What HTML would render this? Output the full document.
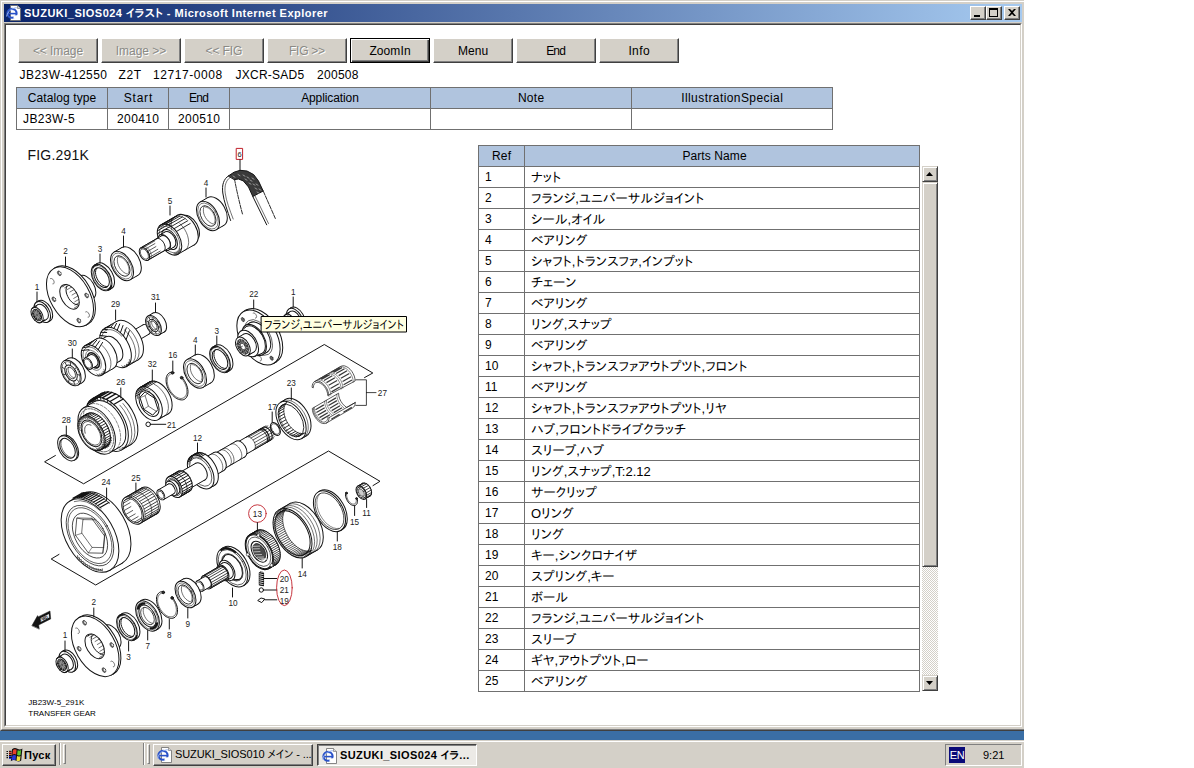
<!DOCTYPE html>
<html lang="ja"><head><meta charset="utf-8"><title>SUZUKI_SIOS024 イラスト</title>
<style>
html,body{margin:0;padding:0;background:#fff;}
body{width:1194px;height:768px;position:relative;overflow:hidden;font-family:"Liberation Sans","IPAPGothic","IPAGothic",sans-serif;font-size:13px;color:#000;}
.abs{position:absolute;}
#win{position:absolute;left:0;top:0;width:1024px;height:731px;background:#d4d0c8;overflow:hidden;}
#win .b1{position:absolute;left:1px;top:1px;width:1030px;bottom:1px;border:1px solid #fff;border-bottom-color:#808080;box-sizing:border-box;}
#win .outer{position:absolute;left:0;top:0;width:1034px;bottom:0;border:1px solid #d4d0c8;border-bottom-color:#404040;box-sizing:border-box;}
#title{position:absolute;left:4px;top:4px;width:1018px;height:18px;background:linear-gradient(to right,#0a246a 0%,#a6caf0 100%);}
#title .t{position:absolute;left:20px;top:2px;color:#fff;font-weight:bold;font-size:11px;line-height:14px;white-space:nowrap;font-family:"Liberation Sans","IPAPGothic","IPAGothic",sans-serif;}
#client{position:absolute;left:4px;top:23px;width:1016px;height:702px;box-sizing:content-box;border:1px solid;border-color:#808080 #fff #fff #808080;}
#client i{position:absolute;left:0;top:0;right:0;bottom:0;background:#fff;border:1px solid;border-color:#404040 #d4d0c8 #d4d0c8 #404040;}
.btn{position:absolute;top:38px;width:80px;height:25px;box-sizing:border-box;background:#d4d0c8;border:1px solid;border-color:#fff #404040 #404040 #fff;box-shadow:inset -1px -1px 0 #808080;font-size:12px;line-height:24px;text-align:center;color:#000;}
.btn.dis{color:#8a8a86;text-shadow:1px 1px 0 #fff;}
.btn.foc{border-color:#000;box-shadow:inset 1px 1px 0 #fff,inset -1px -1px 0 #404040,inset -2px -2px 0 #808080;}
table{border-collapse:collapse;position:absolute;table-layout:fixed;}
td,th{border:1px solid #707070;font-weight:normal;font-size:12px;padding:0;box-sizing:border-box;overflow:hidden;white-space:nowrap;}
th{background:#b0c4de;text-align:center;}
#t1 td,#t1 th{height:21px;}
#t1 td{text-align:center;}
#vin span{position:absolute;top:68px;font-size:12px;line-height:14px;white-space:pre;}
th span,td span,.btn span{white-space:pre;}
#t2 td,#t2 th{height:21px;}
#t2 td{padding-left:6px;text-align:left;}
#t2 td+td{font-size:13px;}
.sbb{position:absolute;left:0;width:16px;height:16px;box-sizing:border-box;background:#d4d0c8;border:1px solid;border-color:#d4d0c8 #404040 #404040 #d4d0c8;box-shadow:inset 1px 1px 0 #fff,inset -1px -1px 0 #808080;}
.sbb svg{position:absolute;left:-1px;top:-1px;}
.trk{position:absolute;left:0;top:0;width:16px;height:525px;background-color:#d4d0c8;background-image:linear-gradient(45deg,#fff 25%,transparent 25%,transparent 75%,#fff 75%),linear-gradient(45deg,#fff 25%,transparent 25%,transparent 75%,#fff 75%);background-size:2px 2px;background-position:0 0,1px 1px;}
.cb{position:absolute;top:2px;width:16px;height:14px;box-sizing:border-box;background:#d4d0c8;border:1px solid;border-color:#fff #404040 #404040 #fff;box-shadow:inset -1px -1px 0 #808080;}
.cb svg{position:absolute;left:-1px;top:-1px;}
.tb{position:absolute;top:4px;height:22px;box-sizing:border-box;background:#d4d0c8;border:1px solid;border-color:#fff #404040 #404040 #fff;box-shadow:inset -1px -1px 0 #808080;font-size:11px;line-height:19px;white-space:nowrap;overflow:hidden;}
.tb.act{border-color:#404040 #fff #fff #404040;box-shadow:inset 1px 1px 0 #808080;background:#eceae6;font-weight:bold;}
.grip{position:absolute;top:4px;width:3px;height:20px;box-sizing:border-box;border:1px solid;border-color:#fff #808080 #808080 #fff;}
.sep{position:absolute;top:3px;width:2px;height:22px;box-sizing:border-box;border-left:1px solid #808080;border-right:1px solid #fff;}
#tray{position:absolute;left:945px;top:4px;width:77px;height:22px;box-sizing:border-box;border:1px solid;border-color:#808080 #fff #fff #808080;font-size:11px;}
#desk{position:absolute;left:0;top:731px;width:1024px;height:9px;background:#3a6ea5;}
#task{position:absolute;left:0;top:740px;width:1024px;height:28px;background:#d4d0c8;box-shadow:inset 0 1px 0 #d4d0c8,inset 0 2px 0 #fff;}
/*FIT*/
#b1{letter-spacing:-0.07px;margin-right:0.07px}
#b2{letter-spacing:-0.03px;margin-right:0.03px}
#b3{letter-spacing:-0.11px;margin-right:0.11px}
#b4{letter-spacing:-0.29px;margin-right:0.29px}
#b5{letter-spacing:0.10px;margin-right:-0.10px}
#b6{letter-spacing:0.06px;margin-right:-0.06px}
#b7{letter-spacing:-0.83px;margin-right:0.83px}
#b8{letter-spacing:0.39px;margin-right:-0.39px}
#v1{letter-spacing:0.45px;margin-right:-0.45px}
#v2{letter-spacing:0.68px;margin-right:-0.68px}
#v3{letter-spacing:0.57px;margin-right:-0.57px}
#v4{letter-spacing:0.25px;margin-right:-0.25px}
#v5{letter-spacing:0.29px;margin-right:-0.29px}
#h1{letter-spacing:0.10px;margin-right:-0.10px}
#h2{letter-spacing:0.79px;margin-right:-0.79px}
#h3{letter-spacing:-0.68px;margin-right:0.68px}
#h4{letter-spacing:-0.10px;margin-right:0.10px}
#h5{letter-spacing:0.28px;margin-right:-0.28px}
#h6{letter-spacing:0.42px;margin-right:-0.42px}
#c1{letter-spacing:0.41px;margin-right:-0.41px}
#c2{letter-spacing:0.37px;margin-right:-0.37px}
#c3{letter-spacing:0.37px;margin-right:-0.37px}
#h7{letter-spacing:0.26px;margin-right:-0.26px}
#h8{letter-spacing:0.09px;margin-right:-0.09px}
#ttl{letter-spacing:0.48px;margin-right:-0.48px}
#tk1{letter-spacing:-0.12px;margin-right:0.12px}
#tk2{letter-spacing:0.40px;margin-right:-0.40px}
/*/FIT*/
</style></head><body>
<div id="win"><div class="outer"></div><div class="b1"></div>
<div id="title"><div class="cb" style="left:966px"><svg width="16" height="14" viewBox="0 0 16 14"><rect x="4" y="9" width="6" height="2" fill="#000"/></svg></div>
<div class="cb" style="left:982px"><svg width="16" height="14" viewBox="0 0 16 14"><path d="M3 2h9v9h-9z M4 4v6h7v-6z" fill="#000" fill-rule="evenodd"/></svg></div>
<div class="cb" style="left:1000px"><svg width="16" height="14" viewBox="0 0 16 14"><path d="M4 3h2l2 2 2-2h2l-3 3.5 3 3.5h-2l-2-2-2 2h-2l3-3.5z" fill="#000"/></svg></div>
<div style="position:absolute;left:2px;top:1px;width:16px;height:16px"><svg class="ie" width="16" height="16" viewBox="0 0 16 16"><path d="M4.5 0.5h7l3 3v12h-10z" fill="#fff" stroke="#6a6a6a" stroke-width="0.8"/><path d="M11.5 0.5v3h3" fill="#d8d8d8" stroke="#6a6a6a" stroke-width="0.6"/><ellipse cx="6" cy="8.3" rx="4.6" ry="4.4" fill="none" stroke="#2a52c8" stroke-width="2.1"/><path d="M1.6 8.6h8.6" stroke="#2a52c8" stroke-width="1.6"/><path d="M7.5 10.3h4v3.5h-4z" fill="#fff"/><path d="M0.6 11.5c1-5 5-8.5 10.2-8.8" fill="none" stroke="#9ab4f0" stroke-width="1"/></svg></div><div class="t" id="ttl">SUZUKI_SIOS024 イラスト - Microsoft Internet Explorer</div></div>
<div id="client"><i></i></div>
</div>
<div class="btn dis" style="left:18px"><span id="b1">&lt;&lt; Image</span></div>
<div class="btn dis" style="left:101px"><span id="b2">Image &gt;&gt;</span></div>
<div class="btn dis" style="left:184px"><span id="b3">&lt;&lt; FIG</span></div>
<div class="btn dis" style="left:267px"><span id="b4">FIG &gt;&gt;</span></div>
<div class="btn foc" style="left:350px"><span id="b5">ZoomIn</span></div>
<div class="btn " style="left:433px"><span id="b6">Menu</span></div>
<div class="btn " style="left:516px"><span id="b7">End</span></div>
<div class="btn " style="left:599px"><span id="b8">Info</span></div>
<div id="vin"><span id="v1" style="left:19.6px">JB23W-412550</span><span id="v2" style="left:118.5px">Z2T</span><span id="v3" style="left:153px">12717-0008</span><span id="v4" style="left:235.5px">JXCR-SAD5</span><span id="v5" style="left:317px">200508</span></div>
<table id="t1" style="left:16px;top:87px;width:817px;">
<colgroup><col style="width:91px"><col style="width:61px"><col style="width:61px"><col style="width:201px"><col style="width:201px"><col style="width:201px"></colgroup>
<tr><th><span id="h1">Catalog type</span></th><th><span id="h2">Start</span></th><th><span id="h3">End</span></th><th><span id="h4">Application</span></th><th><span id="h5">Note</span></th><th><span id="h6">IllustrationSpecial</span></th></tr>
<tr><td style="text-align:left;padding-left:6px"><span id="c1">JB23W-5</span></td><td><span id="c2">200410</span></td><td><span id="c3">200510</span></td><td></td><td></td><td></td></tr>
</table>
<table id="t2" style="left:478px;top:145px;width:441px;">
<colgroup><col style="width:46px"><col style="width:395px"></colgroup>
<tr><th><span id="h7">Ref</span></th><th style="padding-right:15px"><span id="h8">Parts Name</span></th></tr>
<tr><td>1</td><td>ナット</td></tr>
<tr><td>2</td><td>フランジ,ユニバーサルジョイント</td></tr>
<tr><td>3</td><td>シール,オイル</td></tr>
<tr><td>4</td><td>ベアリング</td></tr>
<tr><td>5</td><td>シャフト,トランスファ,インプット</td></tr>
<tr><td>6</td><td>チェーン</td></tr>
<tr><td>7</td><td>ベアリング</td></tr>
<tr><td>8</td><td>リング,スナップ</td></tr>
<tr><td>9</td><td>ベアリング</td></tr>
<tr><td>10</td><td>シャフト,トランスファアウトプツト,フロント</td></tr>
<tr><td>11</td><td>ベアリング</td></tr>
<tr><td>12</td><td>シャフト,トランスファアウトプツト,リヤ</td></tr>
<tr><td>13</td><td>ハブ,フロントドライブクラッチ</td></tr>
<tr><td>14</td><td>スリーブ,ハブ</td></tr>
<tr><td>15</td><td>リング,スナップ,T:2.12</td></tr>
<tr><td>16</td><td>サークリップ</td></tr>
<tr><td>17</td><td>Oリング</td></tr>
<tr><td>18</td><td>リング</td></tr>
<tr><td>19</td><td>キー,シンクロナイザ</td></tr>
<tr><td>20</td><td>スプリング,キー</td></tr>
<tr><td>21</td><td>ボール</td></tr>
<tr><td>22</td><td>フランジ,ユニバーサルジョイント</td></tr>
<tr><td>23</td><td>スリーブ</td></tr>
<tr><td>24</td><td>ギヤ,アウトプツト,ロー</td></tr>
<tr><td>25</td><td>ベアリング</td></tr>
</table>
<div id="sb" class="abs" style="left:922px;top:166px;width:16px;height:525px;">
<div class="trk"></div>
<div class="sbb" style="top:0"><svg width="16" height="16" viewBox="0 0 16 16"><path d="M4 10h7l-3.5-4z" fill="#000"/></svg></div>
<div class="sbb" style="top:16px;height:385px"></div>
<div class="sbb" style="top:509px"><svg width="16" height="16" viewBox="0 0 16 16"><path d="M4 6h7l-3.5 4z" fill="#000"/></svg></div>
</div>
<!--DIAG--><svg id="dg" width="480" height="600" viewBox="0 140 480 600" style="position:absolute;left:0;top:140px;" fill="none" stroke="#141414" stroke-width="1" stroke-linecap="round" stroke-linejoin="round" font-family="Liberation Sans, sans-serif">
<text x="27.5" y="160.3" font-size="14" fill="#111" stroke="none" textLength="61.3">FIG.291K</text>
<ellipse cx="44.4" cy="310.8" rx="6.9" ry="11.5" transform="rotate(-30 44.4 310.8)" fill="#fff"/>
<path d="M36.5 302L38.7 300.8L50.2 320.7L48 322Z" fill="#fff" stroke="none"/>
<path d="M36.5 302L38.7 300.8"/>
<path d="M48 322L50.2 320.7"/>
<ellipse cx="42.3" cy="312" rx="6.9" ry="11.5" transform="rotate(-30 42.3 312)" fill="#fff"/>
<ellipse cx="42.3" cy="312" rx="5.1" ry="8.5" transform="rotate(-30 42.3 312)" fill="#fff"/>
<path d="M32.8 307.6L38 304.6L46.5 319.4L41.3 322.4Z" fill="#fff" stroke="none"/>
<path d="M32.8 307.6L38 304.6"/>
<path d="M41.3 322.4L46.5 319.4"/>
<ellipse cx="37.1" cy="315" rx="5.1" ry="8.5" transform="rotate(-30 37.1 315)" fill="#fff"/>
<path d="M39.6 322.8L44.8 319.8M34.7 320.3L39.9 317.3M31.3 314.4L36.5 311.4M31.6 309L36.8 306" fill="none"/>
<ellipse cx="37.1" cy="315" rx="3.7" ry="6.2" transform="rotate(-30 37.1 315)" fill="#fff"/>
<ellipse cx="37.1" cy="315" rx="3" ry="5" transform="rotate(-30 37.1 315)" fill="#555"/>
<path d="M36.1 313.3L34.6 310.7M36.9 313.2L36.6 310.6M37.8 313.9L38.8 312.2M38.4 315L40.3 314.9M38.5 316L40.6 317.6M38.1 316.7L39.6 319.3M37.3 316.8L37.6 319.4M36.4 316.1L35.4 317.8M35.8 315L33.8 315.1M35.7 314L33.5 312.4" fill="none" stroke="#ddd" stroke-width="0.5"/>
<text x="37" y="290" font-size="8.2" text-anchor="middle" fill="#222" stroke="none">1</text>
<path d="M37 292L37 302"/>
<ellipse cx="81.3" cy="290.3" rx="7.8" ry="13" transform="rotate(-30 81.3 290.3)" fill="#fff"/>
<path d="M64 278.3L74.8 279L87.8 301.6L83 311.3Z" fill="#fff" stroke="none"/>
<path d="M64 278.3L74.8 279"/>
<path d="M83 311.3L87.8 301.6"/>
<ellipse cx="73.5" cy="294.8" rx="11.4" ry="19" transform="rotate(-30 73.5 294.8)" fill="#fff"/>
<ellipse cx="81.3" cy="290.3" rx="7.8" ry="13" transform="rotate(-30 81.3 290.3)" fill="#fff"/>
<ellipse cx="86.5" cy="287.3" rx="7.8" ry="13" transform="rotate(-30 86.5 287.3)" fill="#fff"/>
<path d="M74.8 279L80 276L93 298.6L87.8 301.6Z" fill="#fff" stroke="none"/>
<path d="M74.8 279L80 276"/>
<path d="M87.8 301.6L93 298.6"/>
<ellipse cx="81.3" cy="290.3" rx="7.8" ry="13" transform="rotate(-30 81.3 290.3)" fill="#fff"/>
<ellipse cx="71.9" cy="295.7" rx="19.6" ry="32.6" transform="rotate(-30 71.9 295.7)" fill="#fff"/>
<path d="M53.7 268.6L55.6 267.5L88.2 323.9L86.3 325Z" fill="#fff" stroke="none"/>
<path d="M53.7 268.6L55.6 267.5"/>
<path d="M86.3 325L88.2 323.9"/>
<ellipse cx="70" cy="296.8" rx="19.6" ry="32.6" transform="rotate(-30 70 296.8)" fill="#fff"/>
<ellipse cx="69.5" cy="296.8" rx="8.1" ry="13.5" transform="rotate(-30 69.5 296.8)" fill="#fff"/>
<path d="M77.7 304.8L75.9 304.5L74.1 303.7L72.3 302.5L70.6 300.8L69 298.8L67.8 296.6L66.8 294.3L66.2 292L66 289.8L66.3 287.8L66.9 286.1" fill="none"/>
<path d="M63.2 286L63.2 286" fill="none"/>
<path d="M66.3 284.5L62 287M69 285.3L64.7 287.8M71.7 287L67.4 289.5M74.2 289.5L69.9 292M76.4 292.5L72.1 295M78 295.9L73.7 298.4M79 299.3L74.7 301.8M79.2 302.6L74.9 305.1M78.7 305.4L74.4 307.9" fill="none" stroke-width="0.6"/>
<ellipse cx="59.3" cy="273.3" rx="1.6" ry="2.6" transform="rotate(-30 59.3 273.3)" fill="#777" stroke-width="0.5"/>
<ellipse cx="59.9" cy="273.1" rx="1" ry="1.6" transform="rotate(-30 59.9 273.1)" fill="#fff" stroke-width="0.3"/>
<ellipse cx="86.6" cy="295.5" rx="1.6" ry="2.6" transform="rotate(-30 86.6 295.5)" fill="#777" stroke-width="0.5"/>
<ellipse cx="87.2" cy="295.3" rx="1" ry="1.6" transform="rotate(-30 87.2 295.3)" fill="#fff" stroke-width="0.3"/>
<ellipse cx="78.8" cy="320.6" rx="1.6" ry="2.6" transform="rotate(-30 78.8 320.6)" fill="#777" stroke-width="0.5"/>
<ellipse cx="79.4" cy="320.4" rx="1" ry="1.6" transform="rotate(-30 79.4 320.4)" fill="#fff" stroke-width="0.3"/>
<ellipse cx="53.9" cy="299.3" rx="1.6" ry="2.6" transform="rotate(-30 53.9 299.3)" fill="#777" stroke-width="0.5"/>
<ellipse cx="54.5" cy="299.1" rx="1" ry="1.6" transform="rotate(-30 54.5 299.1)" fill="#fff" stroke-width="0.3"/>
<path d="M50.5 278.6L50.9 278.5L51.3 278.5L51.7 278.6L52.2 278.8L52.7 279.2L53.1 279.7L53.5 280.2L53.8 280.8L54 281.4L54.1 282L54.1 282.5L54.1 283L53.9 283.4L53.6 283.7L53.3 283.9L52.9 283.9" fill="none" stroke-width="0.6"/>
<path d="M85.7 311.9L86.1 311.7L86.5 311.7L87 311.9L87.5 312.1L87.9 312.5L88.4 312.9L88.7 313.5L89 314L89.3 314.6L89.4 315.2L89.4 315.8L89.3 316.3L89.1 316.7L88.9 317L88.5 317.2L88.1 317.2" fill="none" stroke-width="0.6"/>
<text x="65.5" y="254" font-size="8.2" text-anchor="middle" fill="#222" stroke="none">2</text>
<path d="M65.5 257L65.5 266"/>
<ellipse cx="104.2" cy="276.1" rx="8.6" ry="14.4" transform="rotate(-30 104.2 276.1)" fill="#fff"/>
<path d="M94.4 265.1L97 263.6L111.4 288.6L108.8 290.1Z" fill="#fff" stroke="none"/>
<path d="M94.4 265.1L97 263.6"/>
<path d="M108.8 290.1L111.4 288.6"/>
<ellipse cx="101.6" cy="277.6" rx="8.6" ry="14.4" transform="rotate(-30 101.6 277.6)" fill="#fff"/>
<ellipse cx="101.6" cy="277.6" rx="7.9" ry="13.2" transform="rotate(-30 101.6 277.6)" fill="none" stroke-width="0.5"/>
<ellipse cx="101.6" cy="277.6" rx="6.5" ry="10.8" transform="rotate(-30 101.6 277.6)" fill="#fff"/>
<path d="M107.7 286.4L106.2 286.5L104.6 286.1L102.9 285.4L101.3 284.2L99.7 282.6L98.3 280.8L97.2 278.8L96.3 276.7L95.7 274.6L95.5 272.6L95.7 270.7L96.2 269.2L97 268" fill="none"/>
<path d="M111.2 285.9L110.6 287.2L109.9 288.4L109 289.3L107.8 289.9" fill="none" stroke-width="1.6"/>
<path d="M92.7 267.8L93.6 266.5L94.7 265.6L96.1 265.1L97.6 265" fill="none" stroke-width="1.4"/>
<text x="100" y="251.5" font-size="8.2" text-anchor="middle" fill="#222" stroke="none">3</text>
<path d="M100 254L100 263"/>
<ellipse cx="129.8" cy="261.5" rx="9.6" ry="16" transform="rotate(-30 129.8 261.5)" fill="#fff"/>
<path d="M114 252.1L121.8 247.6L137.8 275.4L130 279.9Z" fill="#fff" stroke="none"/>
<path d="M114 252.1L121.8 247.6"/>
<path d="M130 279.9L137.8 275.4"/>
<ellipse cx="122" cy="266" rx="9.6" ry="16" transform="rotate(-30 122 266)" fill="#fff"/>
<ellipse cx="122" cy="266" rx="8.5" ry="14.2" transform="rotate(-30 122 266)" fill="none" stroke-width="0.5"/>
<ellipse cx="122" cy="266" rx="6.7" ry="11.2" transform="rotate(-30 122 266)" fill="#fff" stroke-width="0.8"/>
<path d="M128.8 274L127.2 274L125.6 273.4L123.9 272.4L122.3 271.1L120.8 269.4L119.5 267.5L118.4 265.4L117.7 263.2L117.4 261.2L117.4 259.2L117.7 257.5L118.4 256.1" fill="none" stroke-width="0.6"/>
<path d="M119.2 257.1L120.6 257.4L122.2 258L123.7 259.1L125.2 260.5L126.5 262.2L127.5 264L128.3 266L128.8 268L129 269.8L128.8 271.5L128.3 272.9" fill="none" stroke-width="0.5"/>
<text x="123.5" y="234" font-size="8.2" text-anchor="middle" fill="#222" stroke="none">4</text>
<path d="M123.5 236L123.5 247"/>
<ellipse cx="189.4" cy="228" rx="8.4" ry="14" transform="rotate(-30 189.4 228)" fill="#fff"/>
<path d="M179 217.9L182.4 215.9L196.4 240.1L193 242.1Z" fill="#fff" stroke="none"/>
<path d="M179 217.9L182.4 215.9"/>
<path d="M193 242.1L196.4 240.1"/>
<ellipse cx="186" cy="230" rx="8.4" ry="14" transform="rotate(-30 186 230)" fill="#fff"/>
<ellipse cx="186" cy="230" rx="10.2" ry="17" transform="rotate(-30 186 230)" fill="#fff"/>
<path d="M161 224.8L177.5 215.3L194.5 244.7L178 254.2Z" fill="#fff" stroke="none"/>
<path d="M161 224.8L177.5 215.3"/>
<path d="M178 254.2L194.5 244.7"/>
<ellipse cx="169.5" cy="239.5" rx="10.2" ry="17" transform="rotate(-30 169.5 239.5)" fill="#fff"/>
<path d="M157.3 233.9L171.1 225.9M157.4 230.9L171.2 222.9M158.1 228.2L172 220.2M159.4 226.1L173.3 218.1M161.2 224.7L175 216.7M163.4 224L177.2 216M165.9 224.1L179.8 216.1M168.6 224.9L182.4 216.9M171.3 226.5L185.2 218.5M174 228.7L187.8 220.7M176.4 231.5L190.2 223.5" fill="none" stroke-width="0.9"/>
<path d="M171.8 229.9L171.2 226.6L171.2 223.5L171.7 220.8L172.9 218.6L174.5 217L176.5 216.1L178.9 215.9L181.5 216.5L184.1 217.8L186.8 219.7" fill="none" stroke-width="0.6"/>
<path d="M179.8 223.7L182.3 226.2L184.5 229.1L186.3 232.4L187.6 235.7L188.4 239.1L188.7 242.3L188.3 245.2L187.4 247.6L186 249.4L184.1 250.6" fill="none" stroke-width="0.6"/>
<path d="M179.7 248.3L180.7 250.2L179.2 249.7L179.9 251.6L178.4 250.9L179 252.8L177.5 251.8L177.9 253.7L176.4 252.5L176.6 254.3L175.2 252.9L175.1 254.6L173.8 253" stroke-width="0.6"/>
<ellipse cx="169.5" cy="239.5" rx="8.7" ry="14.5" transform="rotate(-30 169.5 239.5)" fill="none" stroke-width="0.5"/>
<ellipse cx="169.5" cy="239.5" rx="6.6" ry="11" transform="rotate(-30 169.5 239.5)" fill="#fff"/>
<ellipse cx="169.5" cy="239.5" rx="5.3" ry="8.8" transform="rotate(-30 169.5 239.5)" fill="#fff"/>
<path d="M159.9 234.9L165.1 231.9L173.9 247.1L168.7 250.1Z" fill="#fff" stroke="none"/>
<path d="M159.9 234.9L165.1 231.9"/>
<path d="M168.7 250.1L173.9 247.1"/>
<ellipse cx="164.3" cy="242.5" rx="5.3" ry="8.8" transform="rotate(-30 164.3 242.5)" fill="#fff"/>
<ellipse cx="165.2" cy="242" rx="4.3" ry="7.2" transform="rotate(-30 165.2 242)" fill="#fff"/>
<path d="M140.8 247.8L161.6 235.8L168.8 248.2L148 260.2Z" fill="#fff" stroke="none"/>
<path d="M140.8 247.8L161.6 235.8"/>
<path d="M148 260.2L168.8 248.2"/>
<ellipse cx="144.4" cy="254" rx="4.3" ry="7.2" transform="rotate(-30 144.4 254)" fill="#fff"/>
<path d="M148.6 259.6L162.5 251.6M146.3 259.1L160.2 251.1M144 257.3L157.8 249.3M142.1 254.6L155.9 246.6M141 251.6L154.9 243.6M141.1 248.8L154.9 240.8M142.2 247L156.1 239" fill="none" stroke-width="0.7"/>
<path d="M156.4 238.8L157.2 238.5L158.2 238.4L159.3 238.7L160.3 239.2L161.4 240L162.4 241L163.3 242.2L164.1 243.5L164.6 244.9L165 246.2L165.2 247.6L165.1 248.8L164.8 249.8L164.3 250.7L163.6 251.2" fill="none"/>
<path d="M142.5 246.8L143.4 246.5L144.4 246.4L145.4 246.7L146.5 247.2L147.6 248L148.6 249L149.5 250.2L150.2 251.5L150.8 252.9L151.2 254.2L151.3 255.6L151.2 256.8L150.9 257.8L150.4 258.7L149.7 259.2" fill="none" stroke-width="0.5"/>
<ellipse cx="144.4" cy="254" rx="3.4" ry="5.6" transform="rotate(-30 144.4 254)" fill="#fff" stroke-width="0.6"/>
<text x="170" y="204" font-size="8.2" text-anchor="middle" fill="#222" stroke="none">5</text>
<path d="M170 206L170 215"/>
<ellipse cx="215.8" cy="211.5" rx="9.6" ry="16" transform="rotate(-30 215.8 211.5)" fill="#fff"/>
<path d="M200 202.1L207.8 197.6L223.8 225.4L216 229.9Z" fill="#fff" stroke="none"/>
<path d="M200 202.1L207.8 197.6"/>
<path d="M216 229.9L223.8 225.4"/>
<ellipse cx="208" cy="216" rx="9.6" ry="16" transform="rotate(-30 208 216)" fill="#fff"/>
<ellipse cx="208" cy="216" rx="8.5" ry="14.2" transform="rotate(-30 208 216)" fill="none" stroke-width="0.5"/>
<ellipse cx="208" cy="216" rx="6.7" ry="11.2" transform="rotate(-30 208 216)" fill="#fff" stroke-width="0.8"/>
<path d="M214.8 224L213.2 224L211.6 223.4L209.9 222.4L208.3 221.1L206.8 219.4L205.5 217.5L204.4 215.4L203.7 213.2L203.4 211.2L203.4 209.2L203.7 207.5L204.4 206.1" fill="none" stroke-width="0.6"/>
<path d="M205.2 207.1L206.6 207.4L208.2 208L209.7 209.1L211.2 210.5L212.5 212.2L213.5 214L214.3 216L214.8 218L215 219.8L214.8 221.5L214.3 222.9" fill="none" stroke-width="0.5"/>
<text x="206" y="186" font-size="8.2" text-anchor="middle" fill="#222" stroke="none">4</text>
<path d="M206 188L206 197"/>
<path d="M228.6 175.8L234 172.2L240 170.3L247 171L253.7 174.6L258.5 181L263.2 191L252.8 196.5L248.5 187L243.3 180.9L238.5 179L234.6 179.6Z" fill="#3a3a3a"/>
<path d="M233 176l2 1.2M238 174.5l2 1.2M243 175l2 1.2M247 177l2 1.2M250 180l2 1.2M253 184l2 1.2M255 188l2 1.2M257 192l2 1.2M249 183l2 1.2M245 179l2 1.2M252 178l2 1.2M256 184l2 1.2M259 189l2 1.2" stroke="#bbb" stroke-width="0.7"/>
<path d="M228.6 175.8C223.5 179 221.8 185 222.8 193C223.8 201 227.5 211 230.6 220.5" />
<path d="M230 177.5C225.8 180.5 224.3 186 225.2 193C226.2 201 229.8 210 233.2 219" stroke-width="0.6"/>
<path d="M234.6 179.6C236.5 190 239.5 203 242.6 214.5" stroke-dasharray="4 1.2" stroke-width="0.9"/>
<path d="M252.8 196.5L266.7 224.8" /><path d="M254.8 195.5L268.5 223.5" stroke-width="0.6"/>
<path d="M263.2 191L275.7 219.3" stroke-dasharray="4 1.2" stroke-width="0.9"/>
<rect x="236.6" y="148.4" width="6" height="11" stroke="#c0202a" stroke-width="1"/>
<text x="239.7" y="156.7" font-size="7.5" text-anchor="middle" fill="#222" stroke="none">6</text>
<path d="M240 159.8L240 170.3"/>
<ellipse cx="146.1" cy="329.5" rx="3.3" ry="5.5" transform="rotate(-30 146.1 329.5)" fill="#fff"/>
<path d="M124.2 335.7L143.3 324.7L148.8 334.3L129.8 345.3Z" fill="#fff" stroke="none"/>
<path d="M124.2 335.7L143.3 324.7"/>
<path d="M129.8 345.3L148.8 334.3"/>
<ellipse cx="127" cy="340.5" rx="3.3" ry="5.5" transform="rotate(-30 127 340.5)" fill="#fff"/>
<ellipse cx="127.6" cy="340.5" rx="13.2" ry="22" transform="rotate(-30 127.6 340.5)" fill="#fff"/>
<path d="M104.5 328.4L116.6 321.4L138.6 359.6L126.5 366.6Z" fill="#fff" stroke="none"/>
<path d="M104.5 328.4L116.6 321.4"/>
<path d="M126.5 366.6L138.6 359.6"/>
<ellipse cx="115.5" cy="347.5" rx="13.2" ry="22" transform="rotate(-30 115.5 347.5)" fill="#fff"/>
<path d="M100 335.4L106.6 336.3M101 332.3L106.7 332.5M102.7 329.9L107.5 329.3M104.9 328.2L109 326.6M107.6 327.4L111 324.7M110.6 327.5L113.6 323.6M113.9 328.4L116.5 323.4M117.2 330.2L119.7 324M120.4 332.7L123 325.5M123.5 335.9L126.3 327.8M126.1 339.6L129.4 330.8" stroke-width="1"/>
<path d="M102.2 345.7L101.5 341.9L101.5 338.4L102.1 335.4L103.3 332.9L105.1 331L107.4 329.9L110 329.6L112.9 330.2L115.9 331.5L118.9 333.5L121.7 336.2" fill="none" stroke-width="0.6"/>
<path d="M124.2 329.8L127.5 333L130.4 336.9L132.7 341.2L134.4 345.6L135.4 350.1L135.7 354.2L135.1 358L133.8 361L131.9 363.3L129.3 364.7L126.3 365.2" fill="none" stroke-width="0.6"/>
<path d="M127.7 327.8L130.9 331L133.8 334.9L136.2 339.2L137.9 343.6L138.9 348.1L139.1 352.2L138.6 356L137.3 359L135.3 361.3L132.8 362.7L129.7 363.2" fill="none" stroke-width="0.6"/>
<path d="M129.4 359.5L130.2 362.2L128.2 362.1L128.6 364.8L126.5 364.1L126.5 366.6L124.4 365.4L123.9 367.5L121.8 365.8" stroke-width="0.6"/>
<ellipse cx="112.8" cy="349" rx="8.4" ry="14" transform="rotate(-30 112.8 349)" fill="#fff"/>
<path d="M98 341.4L105.8 336.9L119.8 361.1L112 365.6Z" fill="#fff" stroke="none"/>
<path d="M98 341.4L105.8 336.9"/>
<path d="M112 365.6L119.8 361.1"/>
<ellipse cx="105" cy="353.5" rx="8.4" ry="14" transform="rotate(-30 105 353.5)" fill="#fff"/>
<ellipse cx="104.9" cy="353.7" rx="10.2" ry="17" transform="rotate(-30 104.9 353.7)" fill="#fff"/>
<path d="M85 345.6L96.4 339L113.4 368.4L102 375Z" fill="#fff" stroke="none"/>
<path d="M85 345.6L96.4 339"/>
<path d="M102 375L113.4 368.4"/>
<ellipse cx="93.5" cy="360.3" rx="10.2" ry="17" transform="rotate(-30 93.5 360.3)" fill="#fff"/>
<path d="M81.6 350.5L89 349.7M82.7 347.9L89.3 346.4M84.4 346L90.3 343.7M86.7 344.9L91.9 341.7M89.3 344.8L94.1 340.5M92.2 345.6L96.7 340.2M95.2 347.2L99.6 340.9M98.1 349.7L102.6 342.4" stroke-width="1"/>
<path d="M83.3 357.8L83 354.9L83.3 352.3L84 350.1L85.3 348.5L86.9 347.4L88.9 347L91.2 347.3L93.5 348.2L95.9 349.8L98.1 351.9" fill="none" stroke-width="0.6"/>
<path d="M102.1 345.5L104.6 348.1L106.8 351L108.6 354.3L110 357.8L110.8 361.2L110.9 364.4L110.5 367.3L109.5 369.7L108 371.5L106 372.5L103.7 372.9" fill="none" stroke-width="0.6"/>
<path d="M103.9 369.3L104.8 371.9L102.9 371.5L103.3 374L101.3 373.1L101.2 375.4L99.2 373.9L98.7 375.9L96.8 373.9" stroke-width="0.6"/>
<ellipse cx="93.5" cy="360.3" rx="6.6" ry="11" transform="rotate(-30 93.5 360.3)" fill="none" stroke-width="0.5"/>
<ellipse cx="93.5" cy="360.3" rx="5" ry="8.3" transform="rotate(-30 93.5 360.3)" fill="#fff" stroke-width="1.5"/>
<ellipse cx="93.5" cy="360.3" rx="3.8" ry="6.3" transform="rotate(-30 93.5 360.3)" fill="#fff"/>
<path d="M84.7 358.1L90.3 354.8L96.7 365.8L91 369Z" fill="#fff" stroke="none"/>
<path d="M84.7 358.1L90.3 354.8"/>
<path d="M91 369L96.7 365.8"/>
<ellipse cx="87.9" cy="363.6" rx="3.8" ry="6.3" transform="rotate(-30 87.9 363.6)" fill="#fff"/>
<ellipse cx="87.9" cy="363.6" rx="3" ry="5" transform="rotate(-30 87.9 363.6)" fill="#fff" stroke-width="0.6"/>
<text x="115.6" y="307.4" font-size="8.2" text-anchor="middle" fill="#222" stroke="none">29</text>
<path d="M115.6 310L115.6 320"/>
<ellipse cx="158.7" cy="322.5" rx="6.6" ry="11" transform="rotate(-30 158.7 322.5)" fill="#fff"/>
<path d="M148 316L153.2 313L164.2 332L159 335Z" fill="#fff" stroke="none"/>
<path d="M148 316L153.2 313"/>
<path d="M159 335L164.2 332"/>
<ellipse cx="153.5" cy="325.5" rx="6.6" ry="11" transform="rotate(-30 153.5 325.5)" fill="#fff"/>
<ellipse cx="153.5" cy="325.5" rx="5.7" ry="9.5" transform="rotate(-30 153.5 325.5)" fill="none" stroke-width="0.5"/>
<ellipse cx="153.5" cy="325.5" rx="4.1" ry="6.8" transform="rotate(-30 153.5 325.5)" fill="#fff"/>
<path d="M149.9 319.2L148.9 317.5M153.1 319.3L153 317.6M156.6 322.3L157.4 321.4M158.6 326.8L159.9 327.1M158.2 330.7L159.5 332M155.6 332.2L156.2 333.9M152 330.5L151.7 331.9M149.2 326.6L148 326.8M148.3 322.1L146.9 321.2" fill="none" stroke-width="0.8"/>
<ellipse cx="153.5" cy="325.5" rx="3" ry="5" transform="rotate(-30 153.5 325.5)" fill="#fff" stroke-width="0.7"/>
<path d="M156.7 329L155.9 328.9L155.1 328.6L154.4 328L153.6 327.3L153 326.5L152.4 325.5L152 324.5L151.7 323.5L151.7 322.6L151.8 321.7L152 321" fill="none" stroke-width="0.6"/>
<text x="155.5" y="300" font-size="8.2" text-anchor="middle" fill="#222" stroke="none">31</text>
<path d="M155.5 303L155.5 312"/>
<ellipse cx="75.3" cy="370.5" rx="8.4" ry="14" transform="rotate(-30 75.3 370.5)" fill="#fff"/>
<path d="M64 360.9L68.3 358.4L82.3 382.6L78 385.1Z" fill="#fff" stroke="none"/>
<path d="M64 360.9L68.3 358.4"/>
<path d="M78 385.1L82.3 382.6"/>
<ellipse cx="71" cy="373" rx="8.4" ry="14" transform="rotate(-30 71 373)" fill="#fff"/>
<ellipse cx="71" cy="373" rx="7.5" ry="12.5" transform="rotate(-30 71 373)" fill="none" stroke-width="0.5"/>
<ellipse cx="71" cy="373" rx="5.2" ry="8.7" transform="rotate(-30 71 373)" fill="#fff"/>
<path d="M66.4 365L64.9 362.4M70.5 365.1L70.4 362.6M74.9 368.9L76.2 367.6M77.5 374.6L79.5 375.1M77 379.6L78.9 381.7M73.7 381.5L74.6 384.2M69.2 379.4L68.6 381.5M65.5 374.3L63.7 374.8M64.4 368.7L62.3 367.3" fill="none" stroke-width="0.8"/>
<ellipse cx="71" cy="373" rx="3.8" ry="6.3" transform="rotate(-30 71 373)" fill="#fff" stroke-width="0.7"/>
<path d="M74.6 377.8L73.6 377.6L72.6 377.2L71.6 376.5L70.7 375.6L69.8 374.5L69.1 373.3L68.6 372L68.3 370.7L68.2 369.5L68.3 368.4L68.7 367.5" fill="none" stroke-width="0.6"/>
<text x="72.3" y="346" font-size="8.2" text-anchor="middle" fill="#222" stroke="none">30</text>
<path d="M72.3 349L72.3 358"/>
<ellipse cx="68.8" cy="447.6" rx="8.2" ry="13.7" transform="rotate(-30 68.8 447.6)" fill="#fff"/>
<path d="M60.6 436.4L61.9 435.7L75.6 459.4L74.3 460.2Z" fill="#fff" stroke="none"/>
<path d="M60.6 436.4L61.9 435.7"/>
<path d="M74.3 460.2L75.6 459.4"/>
<ellipse cx="67.5" cy="448.3" rx="8.2" ry="13.7" transform="rotate(-30 67.5 448.3)" fill="#fff"/>
<ellipse cx="67.5" cy="448.3" rx="6.5" ry="10.8" transform="rotate(-30 67.5 448.3)" fill="#fff"/>
<path d="M73.1 457.3L71.7 457.4L70.1 457.1L68.4 456.3L66.7 455.1L65.2 453.6L63.8 451.8L62.6 449.8L61.8 447.7L61.2 445.5L61 443.5L61.2 441.7L61.7 440.1L62.5 438.9" fill="none" stroke-width="0.6"/>
<text x="66.3" y="423" font-size="8.2" text-anchor="middle" fill="#222" stroke="none">28</text>
<path d="M66.3 426L66.3 436"/>
<ellipse cx="116.6" cy="418.8" rx="17.7" ry="29.5" transform="rotate(-30 116.6 418.8)" fill="#fff"/>
<path d="M92.3 398.8L101.9 393.3L131.4 444.3L121.8 449.8Z" fill="#fff" stroke="none"/>
<path d="M92.3 398.8L101.9 393.3"/>
<path d="M121.8 449.8L131.4 444.3"/>
<ellipse cx="107.1" cy="424.3" rx="17.7" ry="29.5" transform="rotate(-30 107.1 424.3)" fill="#fff"/>
<path d="M85.9 415.5L95.5 410M85.9 411.1L95.4 405.6M86.5 407.1L96.1 401.6M87.8 403.6L97.4 398.1M89.8 400.8L99.3 395.3M92.3 398.8L101.8 393.3M95.3 397.6L104.8 392.1M98.7 397.3L108.2 391.8M102.3 397.8L111.8 392.3M106.1 399.3L115.6 393.8M110 401.5L119.5 396M113.7 404.5L123.2 399" fill="none" stroke-width="1.35"/>
<path d="M88.5 419.7L88 414.5L88.4 409.7L89.8 405.7L92.1 402.7L95.1 400.7L98.7 400L102.8 400.5L107.1 402.3L111.4 405.1L115.5 409" fill="none" stroke-width="0.6"/>
<path d="M88.2 417.6L86.1 416.9M88 413.7L85.8 412.5M88.3 410.1L86.2 408.4M89.3 406.9L87.2 404.9M90.7 404.2L88.9 401.9M92.7 402.1L91.1 399.6M95.1 400.7L93.7 398.1M97.9 400.1L96.8 397.3M100.9 400.1L100.2 397.4M104.1 400.9L103.8 398.3M107.5 402.5L107.5 400M110.8 404.6L111.2 402.4" fill="none" stroke-width="0.8"/>
<path d="M119.9 405.2L124 410.4L127.3 416.2L129.9 422.2L131.4 428.3L131.8 434.1L131.2 439.3L129.5 443.6L126.8 446.8L123.3 448.7L119.2 449.3" fill="none" stroke-width="0.6"/>
<path d="M122.9 403.5L127 408.7L130.4 414.4L132.9 420.5L134.4 426.6L134.9 432.4L134.2 437.5L132.5 441.8L129.9 445L126.4 447L122.2 447.6" fill="none" stroke-width="0.6"/>
<ellipse cx="107.1" cy="424.3" rx="15.6" ry="26" transform="rotate(-30 107.1 424.3)" fill="#fff"/>
<path d="M83.7 407.8L94.1 401.8L120.1 446.8L109.7 452.8Z" fill="#fff" stroke="none"/>
<path d="M83.7 407.8L94.1 401.8"/>
<path d="M109.7 452.8L120.1 446.8"/>
<ellipse cx="96.7" cy="430.3" rx="15.6" ry="26" transform="rotate(-30 96.7 430.3)" fill="#fff"/>
<ellipse cx="96.7" cy="430.3" rx="14.1" ry="23.5" transform="rotate(-30 96.7 430.3)" fill="none" stroke-width="0.6" stroke-dasharray="2 1.2"/>
<path d="M86.3 431.1L84.5 426L83.4 421L83.2 416.3L83.8 412.1L85.2 408.6L87.4 405.9L90.2 404.2L93.5 403.5L97.3 403.9L101.2 405.3L105.2 407.7L109 411L112.5 415.1L115.5 419.7L117.9 424.6L119.6 429.7L120.5 434.6L120.6 439.2L119.8 443.3L118.2 446.7L115.9 449.2L112.9 450.7L109.5 451.1" fill="none" stroke-width="0.5" stroke-dasharray="3 1.5"/>
<ellipse cx="96.7" cy="430.3" rx="11.4" ry="19" transform="rotate(-30 96.7 430.3)" fill="#fff"/>
<path d="M82 416.8L87.2 413.8L106.2 446.8L101 449.8Z" fill="#fff" stroke="none"/>
<path d="M82 416.8L87.2 413.8"/>
<path d="M101 449.8L106.2 446.8"/>
<ellipse cx="91.5" cy="433.3" rx="11.4" ry="19" transform="rotate(-30 91.5 433.3)" fill="#fff"/>
<path d="M79 433L84.2 430M78.3 430.6L83.5 427.6M77.9 428.1L83.1 425.1M77.8 425.8L83 422.8M78 423.7L83.2 420.7M78.4 421.7L83.6 418.7M79.1 420L84.3 417M80.1 418.5L85.3 415.5M81.3 417.3L86.4 414.3M82.6 416.5L87.8 413.5M84.2 416L89.4 413M86 415.9L91.1 412.9M87.8 416.1L93 413.1M89.7 416.7L94.9 413.7M91.7 417.6L96.9 414.6M93.6 418.8L98.8 415.8M95.5 420.3L100.7 417.3M97.3 422.1L102.5 419.1M99 424.1L104.2 421.1M100.6 426.3L105.8 423.3M102 428.7L107.2 425.7M103.1 431.1L108.3 428.1M104 433.6L109.2 430.6M104.7 436L109.9 433M105.1 438.5L110.3 435.5M105.2 440.8L110.4 437.8M105 442.9L110.2 439.9M104.6 444.9L109.8 441.9M103.9 446.6L109.1 443.6M102.9 448.1L108.1 445.1M101.8 449.3L107 446.3M100.4 450.1L105.6 447.1M98.8 450.6L104 447.6M97.1 450.7L102.3 447.7" fill="none" stroke-width="0.9"/>
<path d="M110.1 435.9L111.9 438.1L110.1 438.3L111.7 440.8L109.7 440.5L111.1 443.1L109 442.4L110.1 445.1L108 444L108.8 446.7L106.7 445.2L107.2 447.9L105.2 446.1L105.4 448.6L103.5 446.5L103.3 448.8L101.6 446.5L101.1 448.6L99.6 446.1L98.7 447.9L97.5 445.2L96.4 446.7L95.4 444L94 445L93.4 442.4L91.7 443L91.4 440.5" stroke-width="0.6"/>
<ellipse cx="91.5" cy="433.3" rx="10.9" ry="18.2" transform="rotate(-30 91.5 433.3)" fill="#fff" stroke-width="0.6"/>
<path d="M80.3 430.5L78.7 428.7L80 428L78.5 425.9L80 425.6L78.8 423.4L80.5 423.5L79.5 421.2L81.3 421.7L80.6 419.4L82.4 420.2L82.1 418L83.9 419.3L83.8 417.1L85.5 418.7L85.8 416.8L87.4 418.7L88 417L89.4 419.1L90.4 417.8L91.5 420L92.7 419L93.6 421.3L95 420.8L95.6 423.1L97.2 422.9L97.5 425.1L99.2 425.4L99.2 427.5L101 428.1L100.6 430L102.4 431L101.7 432.6L103.5 434L102.5 435.3L104.2 437L103 437.9L104.5 439.8L103 440.3L104.3 442.5L102.7 442.5L103.8 444.8L102 444.4L102.8 446.7L101 446L101.4 448.2L99.6 447.1L99.8 449.3L98 447.8L97.8 449.8L96.2 448" stroke-width="0.6"/>
<ellipse cx="91.5" cy="433.3" rx="8.7" ry="14.5" transform="rotate(-30 91.5 433.3)" fill="#fff"/>
<ellipse cx="91.5" cy="433.3" rx="7.8" ry="13" transform="rotate(-30 91.5 433.3)" fill="#fff" stroke-width="0.6"/>
<path d="M85.2 433.2L84.8 431.3L84.7 429.6L84.8 428L85.3 426.7L86 425.6L87 424.9L88.3 424.6L89.6 424.7L91 425.2" fill="none" stroke-width="0.7"/>
<text x="120.8" y="385" font-size="8.2" text-anchor="middle" fill="#222" stroke="none">26</text>
<path d="M120.8 388L120.8 398"/>
<ellipse cx="158.8" cy="398" rx="11.1" ry="18.5" transform="rotate(-30 158.8 398)" fill="#fff"/>
<path d="M139.8 387.6L149.5 381.9L168 414L158.2 419.6Z" fill="#fff" stroke="none"/>
<path d="M139.8 387.6L149.5 381.9"/>
<path d="M158.2 419.6L168 414"/>
<ellipse cx="149" cy="403.6" rx="11.1" ry="18.5" transform="rotate(-30 149 403.6)" fill="#fff"/>
<path d="M135.7 396.2L145.4 390.5M135.9 393.9L145.6 388.3M136.4 391.9L146.2 386.2M137.2 390.1L147 384.5M138.3 388.7L148.1 383.1M139.7 387.6L149.4 382M141.2 386.9L151 381.3M143 386.7L152.8 381M144.9 386.8L154.7 381.1M146.9 387.3L156.7 381.6" fill="none" stroke-width="0.9"/>
<path d="M137.5 398.4L137.6 395.5L138.3 392.9L139.5 391L141.2 389.6L143.3 389L145.7 389.1L148.2 389.9" fill="none" stroke-width="0.6"/>
<path d="M154.2 384.3L157 385.9L159.8 388.2L162.3 391.1L164.6 394.3L166.3 397.9L167.6 401.5L168.3 405.1L168.4 408.4L167.8 411.4L166.7 413.8L165.1 415.6L162.9 416.7L160.5 417.1" fill="none" stroke-width="0.6"/>
<ellipse cx="149" cy="403.6" rx="8.4" ry="14" transform="rotate(-30 149 403.6)" fill="#fff"/>
<path d="M145.3 392.1L154.3 398L158 409.5L152.7 415.1L143.7 409.2L140 397.7Z" fill="#fff"/>
<path d="M156.7 411.6L148.4 406.2L145.1 395.7L150 390.6" stroke-width="0.6"/>
<path d="M143.7 409.2L148.4 406.2" stroke-width="0.5"/>
<path d="M140 397.7L145.1 395.7" stroke-width="0.5"/>
<text x="152.3" y="367.2" font-size="8.2" text-anchor="middle" fill="#222" stroke="none">32</text>
<path d="M152.3 370L152.3 381"/>
<circle cx="148.2" cy="424.3" r="2.3"/>
<path d="M150.6 424.3L165.8 424.3"/>
<text x="171.6" y="427.5" font-size="8.2" text-anchor="middle" fill="#222" stroke="none">21</text>
<path d="M181.8 377.2L183.1 378.7L184.3 380.4L185.3 382.2L186.2 384L186.9 385.9L187.5 387.8L187.8 389.6L188 391.4L187.9 393.1L187.7 394.6L187.2 396L186.6 397.2L185.8 398.2L184.9 399L183.8 399.6L182.5 399.9L181.2 399.9L179.8 399.7L178.4 399.3L176.9 398.6L175.4 397.7L174 396.5L172.6 395.2L171.3 393.7L170.1 392.1L169 390.4L168.1 388.5L167.3 386.7L166.7 384.8L166.3 383L166.1 381.2L166.1 379.4L166.2 377.8L166.6 376.4L167.2 375.1L167.9 374.1L168.8 373.2L169.9 372.6L171.1 372.2L172.4 372.1" fill="none"/>
<path d="M181.3 378.1L182.5 379.5L183.5 381L184.4 382.6L185.2 384.2L185.9 385.9L186.4 387.6L186.7 389.2L186.8 390.8L186.8 392.3L186.5 393.7L186.2 394.9L185.6 396L184.9 396.9L184 397.6L183 398.1L181.9 398.4L180.8 398.5L179.5 398.3L178.2 397.9L176.9 397.3L175.6 396.4L174.3 395.4L173 394.2L171.9 392.9L170.8 391.5L169.8 389.9L169 388.3L168.3 386.6L167.8 384.9L167.4 383.3L167.2 381.7L167.2 380.1L167.4 378.7L167.7 377.4L168.2 376.3L168.9 375.3L169.7 374.6L170.7 374L171.7 373.7L172.9 373.5" fill="none" stroke-width="0.6"/>
<circle cx="181.6" cy="377.7" r="1.3" fill="#333"/>
<circle cx="172.6" cy="372.8" r="1.3" fill="#333"/>
<text x="172.8" y="358.2" font-size="8.2" text-anchor="middle" fill="#222" stroke="none">16</text>
<path d="M172.8 361L172.8 371"/>
<ellipse cx="202.8" cy="369" rx="9.6" ry="16" transform="rotate(-30 202.8 369)" fill="#fff"/>
<path d="M187 359.6L194.8 355.1L210.8 382.9L203 387.4Z" fill="#fff" stroke="none"/>
<path d="M187 359.6L194.8 355.1"/>
<path d="M203 387.4L210.8 382.9"/>
<ellipse cx="195" cy="373.5" rx="9.6" ry="16" transform="rotate(-30 195 373.5)" fill="#fff"/>
<ellipse cx="195" cy="373.5" rx="8.5" ry="14.2" transform="rotate(-30 195 373.5)" fill="none" stroke-width="0.5"/>
<ellipse cx="195" cy="373.5" rx="6.7" ry="11.2" transform="rotate(-30 195 373.5)" fill="#fff" stroke-width="0.8"/>
<path d="M201.8 381.5L200.2 381.5L198.6 380.9L196.9 379.9L195.3 378.6L193.8 376.9L192.5 375L191.4 372.9L190.7 370.7L190.4 368.7L190.4 366.7L190.7 365L191.4 363.6" fill="none" stroke-width="0.6"/>
<path d="M192.2 364.6L193.6 364.9L195.2 365.5L196.7 366.6L198.2 368L199.5 369.7L200.5 371.5L201.3 373.5L201.8 375.5L202 377.3L201.8 379L201.3 380.4" fill="none" stroke-width="0.5"/>
<text x="195.3" y="342.6" font-size="8.2" text-anchor="middle" fill="#222" stroke="none">4</text>
<path d="M195.3 345L195.3 355"/>
<ellipse cx="222.6" cy="358" rx="8.6" ry="14.4" transform="rotate(-30 222.6 358)" fill="#fff"/>
<path d="M212.8 347L215.4 345.5L229.8 370.5L227.2 372Z" fill="#fff" stroke="none"/>
<path d="M212.8 347L215.4 345.5"/>
<path d="M227.2 372L229.8 370.5"/>
<ellipse cx="220" cy="359.5" rx="8.6" ry="14.4" transform="rotate(-30 220 359.5)" fill="#fff"/>
<ellipse cx="220" cy="359.5" rx="7.9" ry="13.2" transform="rotate(-30 220 359.5)" fill="none" stroke-width="0.5"/>
<ellipse cx="220" cy="359.5" rx="6.5" ry="10.8" transform="rotate(-30 220 359.5)" fill="#fff"/>
<path d="M226.1 368.3L224.6 368.4L223 368L221.3 367.3L219.7 366.1L218.1 364.5L216.7 362.7L215.6 360.7L214.7 358.6L214.1 356.5L213.9 354.5L214.1 352.6L214.6 351.1L215.4 349.9" fill="none"/>
<path d="M229.6 367.8L229 369.1L228.3 370.3L227.4 371.2L226.2 371.8" fill="none" stroke-width="1.6"/>
<path d="M211.1 349.7L212 348.4L213.1 347.5L214.5 347L216 346.9" fill="none" stroke-width="1.4"/>
<text x="216.8" y="333.6" font-size="8.2" text-anchor="middle" fill="#222" stroke="none">3</text>
<path d="M216.8 336L216.8 345"/>
<ellipse cx="296.9" cy="317.6" rx="6.9" ry="11.5" transform="rotate(-30 296.9 317.6)" fill="#fff"/>
<path d="M289 308.8L291.2 307.6L302.7 327.5L300.5 328.8Z" fill="#fff" stroke="none"/>
<path d="M289 308.8L291.2 307.6"/>
<path d="M300.5 328.8L302.7 327.5"/>
<ellipse cx="294.8" cy="318.8" rx="6.9" ry="11.5" transform="rotate(-30 294.8 318.8)" fill="#fff"/>
<ellipse cx="294.8" cy="318.8" rx="5.1" ry="8.5" transform="rotate(-30 294.8 318.8)" fill="#fff"/>
<path d="M285.3 314.4L290.5 311.4L299 326.2L293.8 329.2Z" fill="#fff" stroke="none"/>
<path d="M285.3 314.4L290.5 311.4"/>
<path d="M293.8 329.2L299 326.2"/>
<ellipse cx="289.6" cy="321.8" rx="5.1" ry="8.5" transform="rotate(-30 289.6 321.8)" fill="#fff"/>
<path d="M292.1 329.6L297.3 326.6M287.2 327.1L292.4 324.1M283.8 321.2L289 318.2M284.1 315.8L289.3 312.8" fill="none"/>
<ellipse cx="289.6" cy="321.8" rx="3.7" ry="6.2" transform="rotate(-30 289.6 321.8)" fill="#fff"/>
<ellipse cx="289.6" cy="321.8" rx="3" ry="5" transform="rotate(-30 289.6 321.8)" fill="#555"/>
<path d="M288.6 320.1L287.1 317.5M289.4 320L289.1 317.4M290.3 320.7L291.3 319M290.9 321.8L292.8 321.7M291 322.8L293.1 324.4M290.6 323.5L292.1 326.1M289.8 323.6L290.1 326.2M288.9 322.9L287.9 324.6M288.3 321.8L286.3 321.9M288.2 320.8L286 319.2" fill="none" stroke="#ddd" stroke-width="0.5"/>
<ellipse cx="261.1" cy="336" rx="18" ry="30" transform="rotate(-30 261.1 336)" fill="#fff"/>
<path d="M243.5 311.5L246.1 310L276.1 362L273.5 363.5Z" fill="#fff" stroke="none"/>
<path d="M243.5 311.5L246.1 310"/>
<path d="M273.5 363.5L276.1 362"/>
<ellipse cx="258.5" cy="337.5" rx="18" ry="30" transform="rotate(-30 258.5 337.5)" fill="#fff"/>
<ellipse cx="242.9" cy="319.6" rx="1.4" ry="2.3" transform="rotate(-30 242.9 319.6)" fill="#666" stroke-width="0.5"/>
<ellipse cx="269.4" cy="327.3" rx="1.4" ry="2.3" transform="rotate(-30 269.4 327.3)" fill="#666" stroke-width="0.5"/>
<ellipse cx="271.6" cy="358.2" rx="1.4" ry="2.3" transform="rotate(-30 271.6 358.2)" fill="#666" stroke-width="0.5"/>
<ellipse cx="247.6" cy="347.7" rx="1.4" ry="2.3" transform="rotate(-30 247.6 347.7)" fill="#666" stroke-width="0.5"/>
<path d="M253.2 313.1L253.5 313L253.9 313L254.3 313.1L254.8 313.3L255.2 313.7L255.6 314.1L255.9 314.6L256.2 315.1L256.4 315.7L256.6 316.2L256.6 316.7L256.5 317.2L256.3 317.6L256.1 317.9L255.8 318L255.4 318.1" fill="none" stroke-width="0.6"/>
<path d="M258 355.9L258.3 355.8L258.7 355.8L259.2 355.9L259.6 356.1L260 356.5L260.4 356.9L260.8 357.4L261.1 357.9L261.3 358.5L261.4 359L261.4 359.6L261.3 360L261.2 360.4L260.9 360.7L260.6 360.8L260.2 360.9" fill="none" stroke-width="0.6"/>
<ellipse cx="258.5" cy="337.5" rx="11.7" ry="19.5" transform="rotate(-30 258.5 337.5)" fill="none" stroke-width="0.6"/>
<ellipse cx="258.5" cy="337.5" rx="10.2" ry="17" transform="rotate(-30 258.5 337.5)" fill="#fff"/>
<path d="M245.7 325.3L250 322.8L267 352.2L262.7 354.7Z" fill="#fff" stroke="none"/>
<path d="M245.7 325.3L250 322.8"/>
<path d="M262.7 354.7L267 352.2"/>
<ellipse cx="254.2" cy="340" rx="10.2" ry="17" transform="rotate(-30 254.2 340)" fill="#fff"/>
<ellipse cx="254.2" cy="340" rx="9.3" ry="15.5" transform="rotate(-30 254.2 340)" fill="#fff"/>
<path d="M240.9 330.9L246.4 326.6L261.9 353.4L255.4 356.1Z" fill="#fff" stroke="none"/>
<path d="M240.9 330.9L246.4 326.6"/>
<path d="M255.4 356.1L261.9 353.4"/>
<ellipse cx="248.1" cy="343.5" rx="8.7" ry="14.5" transform="rotate(-30 248.1 343.5)" fill="#fff"/>
<ellipse cx="249" cy="343" rx="6.2" ry="10.3" transform="rotate(-30 249 343)" fill="#fff"/>
<path d="M237.8 337.6L243.8 334.1L254.1 351.9L248.1 355.4Z" fill="#fff" stroke="none"/>
<path d="M237.8 337.6L243.8 334.1"/>
<path d="M248.1 355.4L254.1 351.9"/>
<ellipse cx="242.9" cy="346.5" rx="6.2" ry="10.3" transform="rotate(-30 242.9 346.5)" fill="#fff"/>
<ellipse cx="242.9" cy="346.5" rx="4.8" ry="8" transform="rotate(-30 242.9 346.5)" fill="#444" stroke-width="0.6"/>
<path d="M241.4 343.9L238.9 339.6M242.4 343.8L241.5 339.3M243.5 344.4L244.5 341M244.5 345.6L247.1 344.1M245 347L248.5 347.9M245 348.3L248.5 351.3M244.4 349.1L246.9 353.4M243.4 349.2L244.3 353.7M242.3 348.6L241.3 352M241.4 347.4L238.8 348.9M240.8 346L237.3 345.1M240.8 344.7L237.4 341.7" fill="none" stroke="#ddd" stroke-width="0.5"/>
<ellipse cx="242.9" cy="346.5" rx="2.1" ry="3.5" transform="rotate(-30 242.9 346.5)" fill="#fff" stroke-width="0.5"/>
<path d="M247.1 355.8L252.3 352.8M243.7 355.5L248.9 352.5M240.2 353.1L245.4 350.1M237.3 349.2L242.5 346.2M235.7 344.7L240.9 341.7" fill="none" stroke-width="0.6"/>
<text x="253.7" y="297.2" font-size="8.2" text-anchor="middle" fill="#222" stroke="none">22</text>
<path d="M253.7 300L253.7 309"/>
<text x="293.2" y="294.6" font-size="8.2" text-anchor="middle" fill="#222" stroke="none">1</text>
<path d="M293.2 297L293.2 307"/>
<rect x="261.5" y="316.5" width="145" height="15.5" fill="#ffffe1" stroke="#000" stroke-width="1"/>
<text x="264" y="329" font-size="12" fill="#000" stroke="none" textLength="140" lengthAdjust="spacingAndGlyphs" font-family="Liberation Sans, IPAPGothic, IPAGothic, sans-serif">フランジ,ユニバーサルジョイント</text>
<ellipse cx="102.1" cy="528.6" rx="24" ry="40" transform="rotate(-30 102.1 528.6)" fill="#fff"/>
<path d="M70 501L82.1 494L122.1 563.2L110 570.2Z" fill="#fff" stroke="none"/>
<path d="M70 501L82.1 494"/>
<path d="M110 570.2L122.1 563.2"/>
<ellipse cx="90" cy="535.6" rx="24" ry="40" transform="rotate(-30 90 535.6)" fill="#fff"/>
<path d="M73.4 498L82.1 493M75.4 497.6L84 492.6M77.4 497.4L86.1 492.4M79.5 497.4L88.2 492.4M81.7 497.6L90.4 492.6M84 498.1L92.6 493.1M86.3 498.8L94.9 493.8M88.6 499.7L97.2 494.7M90.9 500.8L99.6 495.8M93.2 502.2L101.9 497.2M95.6 503.8L104.2 498.8M97.9 505.5L106.5 500.5M100.1 507.4L108.8 502.4" fill="none" stroke-width="1.2"/>
<path d="M72.6 498.3L79.1 497.4L86.3 498.8L93.8 502.5L101.1 508.3" fill="none" stroke-width="0.7"/>
<path d="M81.3 493.3L87.7 492.4L94.9 493.8L102.4 497.5L109.7 503.3" fill="none" stroke-width="0.7"/>
<path d="M74.3 501.6L80.1 500.7L86.7 502L93.5 505.5L100.2 510.8" fill="none" stroke-width="0.6"/>
<ellipse cx="90" cy="535.6" rx="19.8" ry="33" transform="rotate(-30 90 535.6)" fill="none" stroke-width="0.7"/>
<ellipse cx="90" cy="535.6" rx="18.3" ry="30.5" transform="rotate(-30 90 535.6)" fill="none" stroke-width="0.6"/>
<ellipse cx="90" cy="535.6" rx="14.7" ry="24.5" transform="rotate(-30 90 535.6)" fill="#fff" stroke-width="0.7"/>
<path d="M77.2 518L91.7 518.3L104.5 535.9L102.8 553.2L88.3 552.9L75.5 535.3Z" fill="#fff" stroke-width="0.7"/>
<path d="M83.3 519.6L94.8 519.8L105 533.9L103.7 547.6L92.1 547.4L81.9 533.3Z" fill="none" stroke-width="0.6"/>
<path d="M77.2 518L83.3 519.6" stroke-width="0.5"/>
<path d="M91.7 518.3L94.8 519.8" stroke-width="0.5"/>
<path d="M104.5 535.9L105 533.9" stroke-width="0.5"/>
<path d="M102.8 553.2L103.7 547.6" stroke-width="0.5"/>
<path d="M88.3 552.9L92.1 547.4" stroke-width="0.5"/>
<path d="M75.5 535.3L81.9 533.3" stroke-width="0.5"/>
<path d="M102.3 568.9L102.2 571.2L100.5 569L100.2 571.1L98.7 568.8L98.2 570.8L96.8 568.5L96.2 570.4L94.9 568L94.1 569.7L92.9 567.2L92.1 568.9L90.9 566.4L90 567.9L89 565.3L87.8 566.6L87 564.1L85.8 565.3L85 562.7L83.7 563.7L83.1 561.2L81.7 562L81.2 559.5L79.7 560.1L79.4 557.7L77.8 558.1L77.6 555.7" stroke-width="0.7"/>
<text x="106" y="485.4" font-size="8.2" text-anchor="middle" fill="#222" stroke="none">24</text>
<path d="M106.6 488L106.6 500"/>
<ellipse cx="149.4" cy="500.8" rx="9" ry="15" transform="rotate(-30 149.4 500.8)" fill="#fff"/>
<path d="M125.1 497.5L141.9 487.8L156.9 513.8L140.1 523.5Z" fill="#fff" stroke="none"/>
<path d="M125.1 497.5L141.9 487.8"/>
<path d="M140.1 523.5L156.9 513.8"/>
<ellipse cx="132.6" cy="510.5" rx="9" ry="15" transform="rotate(-30 132.6 510.5)" fill="#fff"/>
<path d="M127.5 496.2L140.9 488.5M129.3 495.8L142.7 488.1M131.3 495.9L144.6 488.2M133.4 496.6L146.7 488.9M135.5 497.7L148.9 490M137.6 499.4L151 491.7M139.6 501.4L152.9 493.7M141.3 503.7L154.7 496M142.8 506.3L156.2 498.6M144 509L157.3 501.3M144.8 511.7L158.1 504M145.1 514.3L158.5 506.6M145.1 516.8L158.4 509.1M144.6 518.9L157.9 511.2M143.7 520.7L157.1 513M142.5 522L155.8 514.3" fill="none" stroke-width="0.8"/>
<path d="M126.8 496.5L128.6 495.9L130.7 495.8L132.8 496.3L135.1 497.5L137.3 499.1L139.4 501.2L141.3 503.7L142.9 506.4L144.1 509.2L144.8 512.1L145.1 514.8L145 517.4L144.4 519.5L143.3 521.3L141.8 522.5" fill="none" stroke-width="0.6"/>
<path d="M133.5 492.7L135.3 492L137.3 492L139.5 492.5L141.8 493.6L144 495.3L146.1 497.4L148 499.8L149.5 502.5L150.7 505.4L151.5 508.2L151.8 511L151.6 513.5L151 515.7L150 517.4L148.5 518.6" fill="none" stroke-width="0.6"/>
<path d="M140.2 488.8L142 488.2L144 488.1L146.2 488.6L148.4 489.8L150.7 491.4L152.8 493.5L154.6 496L156.2 498.7L157.4 501.5L158.2 504.4L158.5 507.1L158.3 509.7L157.7 511.8L156.6 513.6L155.2 514.8" fill="none" stroke-width="0.6"/>
<ellipse cx="132.6" cy="510.5" rx="7.9" ry="13.2" transform="rotate(-30 132.6 510.5)" fill="#fff" stroke-width="0.7"/>
<path d="M137.2 522.6L144.1 518.6M134.3 522.2L141.2 518.2M131.2 520.6L138.1 516.6M128.2 517.9L135.2 513.9M125.7 514.5L132.7 510.5M124 510.6L130.9 506.6M123.1 506.7L130.1 502.7M123.3 503.2L130.2 499.2M124.4 500.5L131.4 496.5" fill="none" stroke-width="0.7"/>
<text x="135.9" y="480.7" font-size="8.2" text-anchor="middle" fill="#222" stroke="none">25</text>
<path d="M135.9 483L135.9 492"/>
<ellipse cx="266.9" cy="433.8" rx="4.4" ry="7.4" transform="rotate(-30 266.9 433.8)" fill="#fff"/>
<path d="M235.9 443.1L263.2 427.3L270.6 440.2L243.3 455.9Z" fill="#fff" stroke="none"/>
<path d="M235.9 443.1L263.2 427.3"/>
<path d="M243.3 455.9L270.6 440.2"/>
<ellipse cx="239.6" cy="449.5" rx="4.4" ry="7.4" transform="rotate(-30 239.6 449.5)" fill="#fff"/>
<path d="M246.9 436.8L266 425.8M248.9 436.9L267.9 425.9M251 438L270.1 427M253 440L272.1 429M254.5 442.6L273.6 431.6M255.3 445.4L274.4 434.4M255.2 447.8L274.2 436.8M254.2 449.5L273.3 438.5" fill="none" stroke-width="0.7"/>
<path d="M246.3 437.1L247.2 436.8L248.2 436.7L249.3 437L250.4 437.6L251.5 438.4L252.5 439.4L253.5 440.6L254.2 442L254.8 443.4L255.2 444.8L255.4 446.1L255.3 447.4L255 448.5L254.5 449.3L253.7 449.9" fill="none" stroke-width="0.6"/>
<path d="M258.5 430.1L259.3 429.8L260.3 429.7L261.4 430L262.5 430.6L263.6 431.4L264.7 432.4L265.6 433.6L266.4 435L267 436.4L267.3 437.8L267.5 439.1L267.4 440.4L267.1 441.5L266.6 442.3L265.9 442.9" fill="none"/>
<path d="M260.2 429.1L261.1 428.8L262.1 428.7L263.2 429L264.3 429.6L265.4 430.4L266.4 431.4L267.3 432.6L268.1 434L268.7 435.4L269.1 436.8L269.2 438.1L269.1 439.4L268.8 440.5L268.3 441.3L267.6 441.9" fill="none" stroke-width="1.2"/>
<ellipse cx="240.5" cy="449" rx="5.4" ry="9" transform="rotate(-30 240.5 449)" fill="#fff"/>
<path d="M213.5 454.2L236 441.2L245 456.8L222.5 469.8Z" fill="#fff" stroke="none"/>
<path d="M213.5 454.2L236 441.2"/>
<path d="M222.5 469.8L245 456.8"/>
<ellipse cx="218" cy="462" rx="5.4" ry="9" transform="rotate(-30 218 462)" fill="#fff"/>
<path d="M220.4 450.2L221.5 449.8L222.7 449.8L224 450.1L225.4 450.8L226.7 451.8L228 453L229.1 454.5L230 456.1L230.8 457.8L231.2 459.6L231.4 461.2L231.3 462.7L230.9 464L230.3 465.1L229.4 465.8" fill="none" stroke-width="0.6"/>
<path d="M223 448.7L224.1 448.3L225.3 448.3L226.6 448.6L228 449.3L229.3 450.3L230.6 451.5L231.7 453L232.6 454.6L233.4 456.3L233.8 458.1L234 459.7L233.9 461.2L233.5 462.5L232.9 463.6L232 464.3" fill="none" stroke-width="0.6"/>
<path d="M230.8 444.2L231.9 443.8L233.1 443.8L234.4 444.1L235.8 444.8L237.1 445.8L238.4 447L239.5 448.5L240.4 450.1L241.1 451.8L241.6 453.6L241.8 455.2L241.7 456.7L241.3 458L240.7 459.1L239.8 459.8" fill="none" stroke-width="0.6"/>
<ellipse cx="218.9" cy="461.5" rx="6.2" ry="10.3" transform="rotate(-30 218.9 461.5)" fill="#fff"/>
<path d="M199.8 460.6L213.7 452.6L224 470.4L210.2 478.4Z" fill="#fff" stroke="none"/>
<path d="M199.8 460.6L213.7 452.6"/>
<path d="M210.2 478.4L224 470.4"/>
<ellipse cx="205" cy="469.5" rx="6.2" ry="10.3" transform="rotate(-30 205 469.5)" fill="#fff"/>
<path d="M210.2 454.6L211.5 454.1L212.9 454.1L214.4 454.5L215.9 455.2L217.5 456.4L218.9 457.8L220.2 459.5L221.3 461.4L222.1 463.3L222.6 465.3L222.8 467.2L222.7 468.9L222.3 470.4L221.5 471.6L220.5 472.4" fill="none" stroke-width="0.6"/>
<ellipse cx="205" cy="469.5" rx="11.1" ry="18.5" transform="rotate(-30 205 469.5)" fill="#fff"/>
<path d="M191.4 456L195.8 453.5L214.3 485.5L209.9 488Z" fill="#fff" stroke="none"/>
<path d="M191.4 456L195.8 453.5"/>
<path d="M209.9 488L214.3 485.5"/>
<ellipse cx="200.7" cy="472" rx="11.1" ry="18.5" transform="rotate(-30 200.7 472)" fill="#fff"/>
<path d="M187.6 462.1L191.9 459.6M188 460.4L192.4 457.9M188.7 458.9L193 456.4M189.5 457.7L193.8 455.2M190.5 456.6L194.8 454.1M191.7 455.9L196 453.4M193 455.3L197.3 452.8M194.4 455.1L198.8 452.6M196 455.1L200.3 452.6M197.6 455.4L201.9 452.9M199.3 455.9L203.6 453.4M201 456.7L205.3 454.2" fill="none" stroke-width="1"/>
<path d="M188.9 464.2L189.4 461.5L190.6 459.4L192.2 457.8L194.3 457L196.7 456.9L199.3 457.6L202 459" fill="none" stroke-width="0.6"/>
<ellipse cx="200.7" cy="472" rx="9.3" ry="15.5" transform="rotate(-30 200.7 472)" fill="none" stroke-width="0.6"/>
<ellipse cx="200.5" cy="471.5" rx="5.7" ry="9.5" transform="rotate(-30 200.5 471.5)" fill="#fff"/>
<path d="M179.2 472.8L195.7 463.3L205.2 479.7L188.8 489.2Z" fill="#fff" stroke="none"/>
<path d="M179.2 472.8L195.7 463.3"/>
<path d="M188.8 489.2L205.2 479.7"/>
<ellipse cx="184" cy="481" rx="5.7" ry="9.5" transform="rotate(-30 184 481)" fill="#fff"/>
<ellipse cx="184" cy="481.2" rx="6.9" ry="11.5" transform="rotate(-30 184 481.2)" fill="#fff"/>
<path d="M168.2 477L178.2 471.3L189.7 491.2L179.8 497Z" fill="#fff" stroke="none"/>
<path d="M168.2 477L178.2 471.3"/>
<path d="M179.8 497L189.7 491.2"/>
<ellipse cx="174" cy="487" rx="6.9" ry="11.5" transform="rotate(-30 174 487)" fill="#fff"/>
<path d="M168.2 477L178.2 471.3M170 476.5L180 470.7M172 476.7L182 470.9M174.2 477.5L184.1 471.8M176.3 479L186.3 473.3M178.3 481.1L188.2 475.3M180 483.6L189.9 477.8M181.3 486.2L191.2 480.5M182.1 489L192 483.2M182.3 491.6L192.3 485.9M182 493.9L191.9 488.1M181.1 495.7L191.1 490M179.8 497L189.7 491.2" fill="none" stroke-width="1"/>
<path d="M173 474.3L174.4 473.8L175.9 473.7L177.6 474.2L179.4 475L181.1 476.3L182.7 477.9L184.1 479.8L185.3 481.9L186.2 484L186.8 486.2L187.1 488.4L186.9 490.3L186.4 491.9L185.6 493.3L184.5 494.2" fill="none" stroke-width="0.7"/>
<ellipse cx="174" cy="487" rx="5.7" ry="9.5" transform="rotate(-30 174 487)" fill="#fff" stroke-width="0.6"/>
<ellipse cx="174" cy="487" rx="4.8" ry="8" transform="rotate(-30 174 487)" fill="#fff"/>
<path d="M167.4 481.6L170 480.1L178 493.9L175.4 495.4Z" fill="#fff" stroke="none"/>
<path d="M167.4 481.6L170 480.1"/>
<path d="M175.4 495.4L178 493.9"/>
<ellipse cx="171.4" cy="488.5" rx="4.8" ry="8" transform="rotate(-30 171.4 488.5)" fill="#fff"/>
<ellipse cx="171.2" cy="488.8" rx="3.3" ry="5.5" transform="rotate(-30 171.2 488.8)" fill="#fff"/>
<path d="M158.1 490L168.4 484L173.9 493.6L163.6 499.6Z" fill="#fff" stroke="none"/>
<path d="M158.1 490L168.4 484"/>
<path d="M163.6 499.6L173.9 493.6"/>
<ellipse cx="160.8" cy="494.8" rx="3.3" ry="5.5" transform="rotate(-30 160.8 494.8)" fill="#fff"/>
<ellipse cx="160.8" cy="494.8" rx="2.4" ry="4" transform="rotate(-30 160.8 494.8)" fill="#fff" stroke-width="0.6"/>
<text x="197.5" y="440.7" font-size="8.2" text-anchor="middle" fill="#222" stroke="none">12</text>
<path d="M197.5 443L197.5 453"/>
<ellipse cx="275.4" cy="429" rx="4.2" ry="7" transform="rotate(-30 275.4 429)" fill="none"/>
<ellipse cx="275.4" cy="429" rx="3.5" ry="5.8" transform="rotate(-30 275.4 429)" fill="none" stroke-width="0.6"/>
<text x="272.2" y="409.8" font-size="8.2" text-anchor="middle" fill="#222" stroke="none">17</text>
<path d="M272.2 412L272.2 422.5"/>
<ellipse cx="295.9" cy="417.6" rx="12.6" ry="21" transform="rotate(-30 295.9 417.6)" fill="#fff"/>
<path d="M280.5 402.3L285.4 399.5L306.4 435.8L301.5 438.7Z" fill="#fff" stroke="none"/>
<path d="M280.5 402.3L285.4 399.5"/>
<path d="M301.5 438.7L306.4 435.8"/>
<ellipse cx="291" cy="420.5" rx="12.6" ry="21" transform="rotate(-30 291 420.5)" fill="#fff"/>
<path d="M280.9 402.4L283.2 400.8L285.8 400.1L288.9 400.2L292.1 401.3L295.4 403.2L298.6 405.9L301.5 409.2L304.1 412.9L306.1 417L307.5 421.2L308.2 425.3L308.2 429.1L307.5 432.5L306.1 435.2L304.1 437.1L301.6 438.3" fill="none" stroke-width="0.6"/>
<ellipse cx="291" cy="420.5" rx="10.7" ry="17.8" transform="rotate(-30 291 420.5)" fill="#fff" stroke-width="0.8"/>
<path d="M298.5 436.5L304.2 433.3M296.6 436.8L302.2 433.6M294.4 436.6L300 433.3M292.2 435.9L297.8 432.6M289.9 434.6L295.5 431.4M287.6 433L293.2 429.7M285.5 430.9L291.1 427.7M283.5 428.5L289.1 425.2M281.8 425.8L287.4 422.6M280.3 423L285.9 419.8M279.2 420.1L284.8 416.9M278.5 417.2L284.1 414M278.2 414.4L283.8 411.2M278.3 411.8L283.9 408.6M278.8 409.5L284.4 406.3M279.7 407.5L285.3 404.3M280.9 406L286.5 402.7" fill="none" stroke-width="0.9"/>
<path d="M304.5 433.1L302.2 433.6L299.7 433.3L297.1 432.3L294.4 430.6L291.8 428.4L289.4 425.7L287.4 422.6L285.7 419.3L284.6 415.9L283.9 412.5L283.8 409.4L284.3 406.6L285.3 404.2L286.8 402.5" fill="none" stroke-width="0.7"/>
<path d="M300.2 435.6L297.9 436.1L295.4 435.8L292.7 434.8L290 433.1L287.5 430.9L285.1 428.2L283 425.1L281.4 421.8L280.2 418.4L279.6 415L279.5 411.9L280 409.1L281 406.7L282.5 405" fill="none" stroke-width="0.5"/>
<text x="291.3" y="385.5" font-size="8.2" text-anchor="middle" fill="#222" stroke="none">23</text>
<path d="M291.3 388L291.3 400"/>
<path d="M312.1 386.9L312.3 385.1L312.8 383.6L313.6 382.3L314.7 381.5L340.9 366.3L342.5 365.8L344.3 365.8L346.2 366.5L348.2 367.6L350.1 369.3L351.8 371.3L353.2 373.7L354.3 376.1L354.9 378.6L355.1 381L327.7 395.5L327.5 393.2L326.8 390.8L325.7 388.5L324.2 386.4L322.5 384.6L320.6 383.3L318.8 382.5L317 382.4L315.5 382.8L314.3 383.9L313.6 385.5L313.3 387.5Z" fill="#fff" stroke-width="0.7"/>
<path d="M314.7 381.5L316.3 380.9L318.1 381L320 381.6L322 382.8L323.8 384.4L325.5 386.5L327 388.8L328 391.3L328.7 393.8L328.9 396.1" stroke-width="0.7"/>
<path d="M316.6 380.4L318.2 379.8L320 379.9L321.9 380.5L323.9 381.7L325.8 383.3L327.5 385.4L328.9 387.7L329.9 390.2L330.6 392.7L330.8 395" stroke-width="0.5"/>
<path d="M327 374.4L328.5 373.8L330.3 373.9L332.3 374.5L334.2 375.7L336.1 377.4L337.8 379.4L339.2 381.7L340.3 384.2L340.9 386.7L341.1 389.1" stroke-width="0.5"/>
<path d="M328.7 373.4L330.3 372.8L332.1 372.9L334 373.5L336 374.7L337.8 376.4L339.5 378.4L341 380.7L342 383.2L342.7 385.7L342.8 388.1" stroke-width="0.5"/>
<path d="M339 367.4L340.6 366.9L342.4 366.9L344.3 367.6L346.3 368.7L348.2 370.4L349.9 372.4L351.3 374.8L352.4 377.2L353 379.7L353.2 382.1" stroke-width="0.5"/>
<path d="M318.9 379.3L327.3 374.5M331.1 372.3L339.5 367.5M321.3 379.4L329.7 374.6M333.5 372.4L341.9 367.6M324 380.5L332.3 375.7M336.1 373.5L344.5 368.7M326.5 382.6L334.9 377.8M338.7 375.6L347 370.7M328.7 385.3L337.1 380.5M340.9 378.3L349.3 373.5M330.5 388.5L338.8 383.7M342.6 381.5L351 376.7M331.5 391.9L339.8 387M343.6 384.8L352 380" stroke="#3a3a3a" stroke-width="1.25" stroke-linecap="butt"/>
<path d="M329.1 417.6L328.8 419.7L328.2 421.3L327.1 422.6L325.8 423.4L324.2 423.6L322.4 423.4L320.5 422.6L318.7 421.3L316.9 419.6L315.4 417.6L314.1 415.3L313.1 413L312.5 410.6L312.3 408.4L338.6 393.2L338.8 395.8L339.6 398.6L340.9 401.3L342.6 403.8L344.6 405.9L346.8 407.4L355.3 402.5L355.3 402.5L355.1 404.3L354.6 405.8L353.8 407L352.7 407.9L326.5 423" fill="#fff" stroke-width="0.7"/>
<path d="M329.1 417.6L355.3 402.5" stroke-width="0.7"/>
<path d="M327.9 417L327.7 418.8L327.1 420.2L326.2 421.3L325 422L323.6 422.2L322 421.9L320.4 421.1L318.8 420L317.2 418.4L315.9 416.6L314.8 414.6L314 412.6L313.6 410.5L313.5 408.6" stroke-width="0.6"/>
<path d="M321.4 420.8L319.5 419.2L317.7 417.1L316.2 414.8L315.1 412.2L314.4 409.7L314.2 407.3" stroke-width="0.5"/>
<path d="M331.8 414.9L329.8 413.2L328.1 411.2L326.6 408.8L325.5 406.3L324.8 403.7L324.6 401.3" stroke-width="0.5"/>
<path d="M333.5 413.9L331.6 412.2L329.8 410.2L328.3 407.8L327.2 405.3L326.5 402.7L326.3 400.3" stroke-width="0.5"/>
<path d="M343.9 407.9L341.9 406.2L340.1 404.2L338.7 401.8L337.6 399.3L336.9 396.7L336.7 394.3" stroke-width="0.5"/>
<path d="M321.5 419.6L329.9 414.8M333.7 412.6L342 407.8M319.5 417.6L327.8 412.8M331.7 410.6L340 405.8M317.7 415.2L326.1 410.4M329.9 408.2L338.3 403.3M316.4 412.5L324.7 407.7M328.5 405.5L336.9 400.6M315.5 409.7L323.9 404.9M327.7 402.7L336 397.9M331.3 419.2L339.6 414.4M343.4 412.2L351.8 407.4" stroke="#3a3a3a" stroke-width="1.25" stroke-linecap="butt"/>
<path d="M355.8 379.8H366.4V405.4H355.8M366.4 392.6H376" stroke-width="0.8"/>
<text x="382.4" y="396.2" font-size="8.2" text-anchor="middle" fill="#222" stroke="none">27</text>
<ellipse cx="366.3" cy="489.7" rx="4.4" ry="7.4" transform="rotate(-30 366.3 489.7)" fill="#fff"/>
<path d="M357.6 486.2L362.6 483.3L370 496.1L365 499Z" fill="#fff" stroke="none"/>
<path d="M357.6 486.2L362.6 483.3"/>
<path d="M365 499L370 496.1"/>
<ellipse cx="361.3" cy="492.6" rx="4.4" ry="7.4" transform="rotate(-30 361.3 492.6)" fill="#fff"/>
<path d="M357.9 486L363 483.1M359.7 485.9L364.7 483M361.6 486.6L366.7 483.7M363.5 488.2L368.6 485.3M365.1 490.4L370.2 487.5M366.2 492.9L371.2 490M366.6 495.3L371.7 492.4M366.3 497.4L371.3 494.5M365.3 498.8L370.3 495.9" fill="none" stroke-width="0.8"/>
<ellipse cx="361.3" cy="492.6" rx="3.7" ry="6.1" transform="rotate(-30 361.3 492.6)" fill="#fff" stroke-width="0.7"/>
<path d="M363.4 498.2L366.5 496.4M361.2 497.6L364.2 495.9M359 495.7L362.1 494M357.4 493L360.5 491.3M356.9 490.2L359.9 488.4M357.5 488L360.6 486.2" fill="none" stroke-width="0.7"/>
<ellipse cx="361.3" cy="492.6" rx="2.4" ry="4" transform="rotate(-30 361.3 492.6)" fill="#ccc" stroke-width="0.5"/>
<text x="366.6" y="516.3" font-size="8.2" text-anchor="middle" fill="#222" stroke="none">11</text>
<path d="M366.6 499.5L366.6 507.5"/>
<path d="M357.1 498.5L357.4 500L357.5 501.3L357.3 502.6L357 503.7L356.4 504.5L355.7 505.2L354.8 505.5L353.8 505.6L352.6 505.4L351.5 504.9L350.3 504.2L349.2 503.2L348.2 502L347.3 500.7L346.6 499.3L346 497.8L345.6 496.3L345.5 494.9L345.6 493.7L345.9 492.5" fill="none"/>
<path d="M356 498.4L356.3 499.6L356.3 500.7L356.2 501.7L355.9 502.6L355.5 503.3L354.9 503.8L354.1 504.1L353.3 504.1L352.4 504L351.5 503.6L350.6 503L349.7 502.2L348.8 501.2L348.1 500.2L347.5 499L347.1 497.8L346.8 496.7L346.7 495.5L346.7 494.5L347 493.6" fill="none" stroke-width="0.6"/>
<circle cx="356.6" cy="498.5" r="0.9" fill="#333"/><circle cx="346.5" cy="493.1" r="0.9" fill="#333"/>
<text x="354.6" y="524.6" font-size="8.2" text-anchor="middle" fill="#222" stroke="none">15</text>
<path d="M354.6 506L354.6 515.5"/>
<ellipse cx="331.2" cy="510.2" rx="13.4" ry="22.3" transform="rotate(-30 331.2 510.2)" fill="#fff"/>
<path d="M318.4 491.9L320.1 490.9L342.4 529.5L340.6 530.5Z" fill="#fff" stroke="none"/>
<path d="M318.4 491.9L320.1 490.9"/>
<path d="M340.6 530.5L342.4 529.5"/>
<ellipse cx="329.5" cy="511.2" rx="13.4" ry="22.3" transform="rotate(-30 329.5 511.2)" fill="#fff"/>
<ellipse cx="329.5" cy="511.2" rx="12" ry="20" transform="rotate(-30 329.5 511.2)" fill="#fff" stroke-width="0.7"/>
<path d="M339.3 528.3L336.5 528.5L333.6 527.9L330.5 526.4L327.4 524.2L324.5 521.4L322 518L319.8 514.3L318.2 510.4L317.2 506.5L316.8 502.8L317.1 499.4L318 496.5L319.6 494.2" fill="none" stroke-width="0.5"/>
<text x="337.3" y="550" font-size="8.2" text-anchor="middle" fill="#222" stroke="none">18</text>
<path d="M337.3 531.5L337.3 541"/>
<ellipse cx="303.8" cy="526.7" rx="16.2" ry="27" transform="rotate(-30 303.8 526.7)" fill="#fff"/>
<path d="M279 509.8L290.3 503.3L317.3 550.1L306 556.6Z" fill="#fff" stroke="none"/>
<path d="M279 509.8L290.3 503.3"/>
<path d="M306 556.6L317.3 550.1"/>
<ellipse cx="292.5" cy="533.2" rx="16.2" ry="27" transform="rotate(-30 292.5 533.2)" fill="#fff"/>
<path d="M276.4 515.5L278 511.8L280.4 509.1L283.5 507.5L287.2 507L291.3 507.6L295.5 509.4L299.7 512.3L303.7 516.1L307.2 520.6L310.3 525.7L312.5 531L314 536.4L314.6 541.5L314.2 546.2L312.9 550.2L310.8 553.3L308 555.4L304.5 556.4" fill="none" stroke-width="0.6"/>
<path d="M279 514L280.6 510.3L283 507.6L286.1 506L289.8 505.5L293.8 506.1L298.1 507.9L302.3 510.8L306.3 514.6L309.8 519.1L312.8 524.2L315.1 529.5L316.6 534.9L317.2 540L316.8 544.7L315.5 548.7L313.4 551.8L310.6 553.9L307.1 554.9" fill="none" stroke-width="0.6"/>
<path d="M282 512.3L283.6 508.6L286.1 505.9L289.2 504.2L292.8 503.7L296.9 504.4L301.1 506.2L305.3 509.1L309.3 512.8L312.9 517.4L315.9 522.4L318.2 527.8L319.6 533.1L320.2 538.3L319.8 543L318.6 547L316.5 550.1L313.6 552.2L310.1 553.1" fill="none" stroke-width="0.6"/>
<ellipse cx="292.5" cy="533.2" rx="14.7" ry="24.5" transform="rotate(-30 292.5 533.2)" fill="#fff"/>
<path d="M303.6 555L311.4 550.5M302.3 555.4L310.1 550.9M301 555.6L308.7 551.1M299.5 555.6L307.3 551.1M298 555.5L305.8 551M296.5 555.2L304.3 550.7M295 554.7L302.7 550.2M293.4 554L301.2 549.5M291.8 553.2L299.6 548.7M290.2 552.2L298 547.7M288.6 551L296.4 546.5M287.1 549.7L294.9 545.2M285.6 548.3L293.4 543.8M284.2 546.8L292 542.3M282.8 545.1L290.6 540.6M281.5 543.3L289.3 538.8M280.3 541.5L288.1 537M279.2 539.6L287 535.1M278.2 537.6L286 533.1M277.4 535.6L285.2 531.1M276.6 533.6L284.4 529.1M276 531.6L283.8 527.1M275.5 529.6L283.3 525.1M275.1 527.6L282.9 523.1M274.9 525.7L282.7 521.2M274.8 523.8L282.6 519.3M274.9 522L282.7 517.5M275.1 520.3L282.9 515.8M275.5 518.7L283.3 514.2M276 517.2L283.7 512.7M276.6 515.9L284.4 511.4M277.3 514.7L285.1 510.2M278.2 513.6L286 509.1M279.2 512.7L287 508.2" fill="none" stroke-width="0.7"/>
<path d="M311.4 550.5L308.2 551.1L304.8 550.8L301.1 549.5L297.3 547.2L293.7 544.1L290.4 540.3L287.6 536.1L285.3 531.4L283.7 526.7L282.8 522L282.7 517.7L283.4 513.8L284.8 510.6L287 508.2" fill="none" stroke-width="0.6"/>
<path d="M309.5 547.9L311 549.2M309 549.3L310.5 550.8M308.4 550.6L309.8 552.2M307.6 551.8L309 553.5M306.8 552.8L308.1 554.6M305.8 553.7L307 555.5M304.8 554.4L305.9 556.3M303.6 555L304.6 556.9M302.4 555.4L303.2 557.4M301 555.6L301.8 557.6M299.7 555.7L300.3 557.7M298.2 555.5L298.7 557.5M296.7 555.2L297.1 557.2M295.2 554.8L295.5 556.7M293.7 554.2L293.8 556.1M292.2 553.4L292.1 555.2M290.6 552.5L290.5 554.2M289.1 551.4L288.8 553M287.6 550.2L287.2 551.7M286.1 548.8L285.6 550.2M284.7 547.4L284 548.6M283.4 545.8L282.6 546.9M282.1 544.1L281.2 545.1M280.9 542.4L279.8 543.2M279.8 540.6L278.6 541.2M278.8 538.7L277.5 539.2M277.8 536.8L276.5 537.1M277 534.8L275.6 535M276.3 532.8L274.9 532.8M275.8 530.9L274.3 530.7M275.4 529L273.8 528.6M275 527.1L273.5 526.5M274.9 525.2L273.3 524.5M274.8 523.4L273.2 522.5M274.9 521.7L273.4 520.6M275.2 520L273.6 518.9M275.5 518.5L274 517.2M276 517.1L274.5 515.6M276.6 515.8L275.2 514.2M277.4 514.6L276 512.9M278.2 513.6L276.9 511.8M279.2 512.7L278 510.9M280.2 512L279.1 510.1M281.4 511.4L280.4 509.5M282.6 511L281.8 509M284 510.8L283.2 508.8M285.3 510.7L284.7 508.7M286.8 510.9L286.3 508.9M288.3 511.2L287.9 509.2M289.8 511.6L289.5 509.7" fill="none" stroke-width="0.5"/>
<text x="302.2" y="577" font-size="8.2" text-anchor="middle" fill="#222" stroke="none">14</text>
<path d="M302.2 558.3L302.2 568"/>
<ellipse cx="266.2" cy="547.7" rx="11.7" ry="19.5" transform="rotate(-30 266.2 547.7)" fill="#fff"/>
<path d="M249.6 534.8L256.5 530.8L276 564.6L269.1 568.6Z" fill="#fff" stroke="none"/>
<path d="M249.6 534.8L256.5 530.8"/>
<path d="M269.1 568.6L276 564.6"/>
<ellipse cx="259.3" cy="551.7" rx="11.7" ry="19.5" transform="rotate(-30 259.3 551.7)" fill="#fff"/>
<path d="M247.6 554.5L254.6 550.5M246.8 552.6L253.8 548.6M246.2 550.7L253.1 546.7M245.7 548.7L252.7 544.7M245.4 546.8L252.3 542.8M245.3 545L252.2 541M245.3 543.2L252.2 539.2M245.4 541.6L252.4 537.6M245.8 540.1L252.7 536.1M246.3 538.7L253.2 534.7M246.9 537.4L253.9 533.4M247.7 536.3L254.6 532.3M248.7 535.4L255.6 531.4M249.7 534.7L256.6 530.7M250.9 534.2L257.8 530.2M252.1 533.9L259.1 529.9M253.5 533.8L260.4 529.8M254.9 533.9L261.9 529.9M256.4 534.3L263.3 530.3M257.9 534.8L264.8 530.8M259.4 535.5L266.4 531.5M261 536.5L267.9 532.5M262.5 537.6L269.4 533.6M263.9 538.8L270.9 534.8M265.3 540.3L272.3 536.3M266.7 541.8L273.6 537.8M267.9 543.5L274.9 539.5M269.1 545.3L276 541.3M270.1 547.1L277.1 543.1M271 549L278 545M271.8 550.9L278.7 546.9M272.4 552.9L279.4 548.9M272.9 554.8L279.8 550.8M273.2 556.7L280.1 552.7M273.3 558.5L280.3 554.5M273.3 560.3L280.3 556.3M273.1 561.9L280.1 557.9M272.8 563.5L279.7 559.5M272.3 564.8L279.2 560.8M271.6 566.1L278.6 562.1M270.8 567.1L277.7 563.1M269.9 568L276.8 564M268.8 568.7L275.7 564.7M267.6 569.2L274.6 565.2M266.4 569.5L273.3 565.5M265 569.6L271.9 565.6" fill="none" stroke-width="0.8"/>
<ellipse cx="259.3" cy="551.7" rx="11.1" ry="18.5" transform="rotate(-30 259.3 551.7)" fill="#fff"/>
<ellipse cx="259.3" cy="551.7" rx="9.6" ry="16" transform="rotate(-30 259.3 551.7)" fill="none" stroke-width="0.6"/>
<circle cx="258.4" cy="535.4" r="1.6" fill="#fff" stroke-width="0.6"/>
<circle cx="271.6" cy="565.2" r="1.6" fill="#fff" stroke-width="0.6"/>
<circle cx="247.9" cy="554.5" r="1.6" fill="#fff" stroke-width="0.6"/>
<ellipse cx="259.3" cy="551.7" rx="6.9" ry="11.5" transform="rotate(-30 259.3 551.7)" fill="#fff"/>
<ellipse cx="259.3" cy="551.7" rx="5.4" ry="9" transform="rotate(-30 259.3 551.7)" fill="#4a4a4a" stroke-width="0.6"/>
<path d="M261.8 559.5L268 559.2M259.5 558.9L265.8 558.6M257.2 557.2L263.5 557M255.2 554.8L261.5 554.5M253.8 551.9L260 551.6M253.2 548.9L259.4 548.7M253.5 546.4L259.7 546.1" stroke="#e8e8e8" stroke-width="0.7"/>
<ellipse cx="234.5" cy="566" rx="12.9" ry="21.5" transform="rotate(-30 234.5 566)" fill="#fff"/>
<path d="M221.6 548.7L223.7 547.4L245.2 584.7L243.1 585.9Z" fill="#fff" stroke="none"/>
<path d="M221.6 548.7L223.7 547.4"/>
<path d="M243.1 585.9L245.2 584.7"/>
<ellipse cx="232.3" cy="567.3" rx="12.9" ry="21.5" transform="rotate(-30 232.3 567.3)" fill="#fff"/>
<ellipse cx="232.3" cy="567.3" rx="11.6" ry="19.3" transform="rotate(-30 232.3 567.3)" fill="none" stroke-width="0.6"/>
<path d="M221.2 550.2L223.4 548.9L226.1 548.5L229 548.9L232.1 550.1L235.1 552.1" fill="none" stroke-width="2" stroke-dasharray="1 0.8"/>
<ellipse cx="232.3" cy="567.3" rx="9" ry="15" transform="rotate(-30 232.3 567.3)" fill="none" stroke-width="0.6"/>
<ellipse cx="232.3" cy="567.3" rx="8.4" ry="14" transform="rotate(-30 232.3 567.3)" fill="#fff"/>
<path d="M221.6 560.8L225.3 555.2L239.3 579.4L232.6 579.8Z" fill="#fff" stroke="none"/>
<path d="M221.6 560.8L225.3 555.2"/>
<path d="M232.6 579.8L239.3 579.4"/>
<ellipse cx="227.1" cy="570.3" rx="6.6" ry="11" transform="rotate(-30 227.1 570.3)" fill="#fff"/>
<ellipse cx="227.1" cy="570.3" rx="5.2" ry="8.6" transform="rotate(-30 227.1 570.3)" fill="#fff"/>
<path d="M218.5 565.4L222.8 562.9L231.4 577.7L227.1 580.2Z" fill="#fff" stroke="none"/>
<path d="M218.5 565.4L222.8 562.9"/>
<path d="M227.1 580.2L231.4 577.7"/>
<ellipse cx="222.8" cy="572.8" rx="5.2" ry="8.6" transform="rotate(-30 222.8 572.8)" fill="#fff"/>
<ellipse cx="222.8" cy="572.8" rx="4.4" ry="7.3" transform="rotate(-30 222.8 572.8)" fill="#fff"/>
<path d="M202.7 576L219.1 566.5L226.4 579.1L210 588.6Z" fill="#fff" stroke="none"/>
<path d="M202.7 576L219.1 566.5"/>
<path d="M210 588.6L226.4 579.1"/>
<ellipse cx="206.3" cy="582.3" rx="4.4" ry="7.3" transform="rotate(-30 206.3 582.3)" fill="#fff"/>
<path d="M203.2 575.7L219.7 566.2M204.9 575.7L221.4 566.2M206.8 576.5L223.2 567M208.6 578L225 568.5M210.1 580.1L226.6 570.6M211.2 582.5L227.6 573M211.6 584.8L228 575.3M211.3 586.8L227.8 577.3M210.5 588.3L226.9 578.8" fill="none" stroke-width="0.8"/>
<ellipse cx="206.8" cy="582" rx="3.5" ry="5.8" transform="rotate(-30 206.8 582)" fill="#fff"/>
<path d="M196.9 581L203.9 577L209.7 587.1L202.7 591.1Z" fill="#fff" stroke="none"/>
<path d="M196.9 581L203.9 577"/>
<path d="M202.7 591.1L209.7 587.1"/>
<ellipse cx="199.8" cy="586" rx="3.5" ry="5.8" transform="rotate(-30 199.8 586)" fill="#fff"/>
<ellipse cx="199.8" cy="586" rx="2.7" ry="4.5" transform="rotate(-30 199.8 586)" fill="#fff" stroke-width="0.6"/>
<text x="233" y="605.5" font-size="8.2" text-anchor="middle" fill="#222" stroke="none">10</text>
<path d="M232.5 588L232.5 597"/>
<rect x="259.2" y="572" width="4.4" height="13.5" rx="1.5" fill="#fff" stroke-width="0.6"/><path d="M259.3 572.8L263.5 573.6M259.3 574.8L263.5 575.6M259.3 576.8L263.5 577.6M259.3 578.8L263.5 579.6M259.3 580.8L263.5 581.6M259.3 582.8L263.5 583.6M259.3 584.8L263.5 585.6" stroke-width="1.1"/>
<path d="M263.8 578.5L276.8 578.5"/>
<text x="284.2" y="581.6" font-size="8.2" text-anchor="middle" fill="#222" stroke="none">20</text>
<circle cx="261.3" cy="590" r="2.2"/>
<path d="M263.6 590L276.8 590"/>
<text x="284.2" y="593.2" font-size="8.2" text-anchor="middle" fill="#222" stroke="none">21</text>
<path d="M258 600.3L261 598L264.8 599L262 602.3Z" fill="#fff"/>
<path d="M264.8 599.8L276.8 599.8"/>
<text x="284.2" y="603.6" font-size="8.2" text-anchor="middle" fill="#222" stroke="none">19</text>
<ellipse cx="284.4" cy="587.8" rx="7.8" ry="17.8" stroke="#c0202a" stroke-width="0.9"/>
<circle cx="257.4" cy="513.6" r="8.8" stroke="#c0202a" stroke-width="0.9"/>
<text x="257.4" y="516.8" font-size="8.2" text-anchor="middle" fill="#222" stroke="none">13</text>
<path d="M257.4 522.6L257.4 531"/>
<ellipse cx="190.7" cy="591.5" rx="8.7" ry="14.5" transform="rotate(-30 190.7 591.5)" fill="#fff"/>
<path d="M178.2 581.9L183.4 578.9L197.9 604.1L192.8 607.1Z" fill="#fff" stroke="none"/>
<path d="M178.2 581.9L183.4 578.9"/>
<path d="M192.8 607.1L197.9 604.1"/>
<ellipse cx="185.5" cy="594.5" rx="8.7" ry="14.5" transform="rotate(-30 185.5 594.5)" fill="#fff"/>
<ellipse cx="185.5" cy="594.5" rx="7.6" ry="12.7" transform="rotate(-30 185.5 594.5)" fill="none" stroke-width="0.5"/>
<ellipse cx="185.5" cy="594.5" rx="6.3" ry="10.5" transform="rotate(-30 185.5 594.5)" fill="#fff" stroke-width="0.8"/>
<path d="M192 601.9L190.6 601.8L189 601.3L187.5 600.4L185.9 599.1L184.5 597.6L183.3 595.8L182.4 593.8L181.7 591.8L181.4 589.9L181.4 588L181.7 586.5L182.4 585.2" fill="none" stroke-width="0.6"/>
<path d="M182.9 586.3L184.2 586.5L185.7 587.1L187.1 588.1L188.4 589.4L189.6 591L190.6 592.7L191.4 594.5L191.8 596.3L192 598L191.8 599.6L191.3 600.9" fill="none" stroke-width="0.5"/>
<text x="187.8" y="626.7" font-size="8.2" text-anchor="middle" fill="#222" stroke="none">9</text>
<path d="M187.8 608.5L187.8 618"/>
<path d="M172.4 597.5L173.6 599L174.6 600.7L175.5 602.4L176.3 604.2L176.9 606L177.3 607.8L177.5 609.5L177.5 611.1L177.4 612.7L177 614.1L176.5 615.3L175.8 616.3L175 617.2L174 617.8L172.9 618.2L171.6 618.4L170.3 618.3L169 618L167.6 617.4L166.2 616.7L164.8 615.7L163.4 614.5L162.1 613.2L160.9 611.7L159.8 610.1L158.9 608.4L158 606.6L157.4 604.8L156.9 603L156.6 601.3L156.5 599.6L156.5 598L156.8 596.5L157.2 595.2L157.9 594.1L158.6 593.2L159.6 592.4L160.6 591.9L161.8 591.7L163.1 591.6" fill="none"/>
<path d="M171.8 598.3L172.9 599.7L173.8 601.2L174.6 602.7L175.3 604.3L175.8 605.9L176.1 607.5L176.3 609L176.4 610.5L176.2 611.8L175.9 613.1L175.5 614.2L174.8 615.1L174.1 615.9L173.2 616.4L172.2 616.8L171.1 616.9L170 616.8L168.7 616.6L167.5 616.1L166.2 615.4L165 614.5L163.8 613.5L162.7 612.3L161.6 610.9L160.6 609.5L159.8 608L159 606.4L158.4 604.8L158 603.2L157.7 601.7L157.6 600.2L157.7 598.8L157.9 597.5L158.3 596.3L158.9 595.3L159.6 594.5L160.4 593.8L161.3 593.4L162.4 593.1L163.5 593.1" fill="none" stroke-width="0.6"/>
<circle cx="172.1" cy="597.9" r="1.3" fill="#333"/>
<circle cx="163.3" cy="592.4" r="1.3" fill="#333"/>
<text x="169.3" y="637.8" font-size="8.2" text-anchor="middle" fill="#222" stroke="none">8</text>
<path d="M169.3 619.5L169.3 629"/>
<ellipse cx="150.1" cy="614.5" rx="9.9" ry="16.5" transform="rotate(-30 150.1 614.5)" fill="#fff"/>
<path d="M139.2 601.7L141.8 600.2L158.3 628.8L155.8 630.3Z" fill="#fff" stroke="none"/>
<path d="M139.2 601.7L141.8 600.2"/>
<path d="M155.8 630.3L158.3 628.8"/>
<ellipse cx="147.5" cy="616" rx="9.9" ry="16.5" transform="rotate(-30 147.5 616)" fill="#fff"/>
<ellipse cx="147.5" cy="616" rx="9" ry="15" transform="rotate(-30 147.5 616)" fill="none" stroke-width="0.5"/>
<ellipse cx="147.5" cy="616" rx="7.2" ry="12" transform="rotate(-30 147.5 616)" fill="#fff"/>
<ellipse cx="147.5" cy="616" rx="5.7" ry="9.5" transform="rotate(-30 147.5 616)" fill="#fff" stroke-width="0.7"/>
<path d="M152.9 623.2L151.4 623L149.9 622.3L148.4 621.3L147 619.9L145.7 618.2L144.7 616.4L143.9 614.5L143.4 612.6L143.2 610.8L143.4 609.1L143.9 607.7" fill="none" stroke-width="0.6"/>
<path d="M137.9 608.7L138.5 606.8L139.5 605.3L140.9 604.2L142.5 603.7L144.3 603.7" fill="none" stroke-width="2.2"/>
<path d="M157.1 623.3L156.5 625.2L155.5 626.7L154.1 627.8L152.5 628.3L150.7 628.3" fill="none" stroke-width="2.2"/>
<text x="147.7" y="648.7" font-size="8.2" text-anchor="middle" fill="#222" stroke="none">7</text>
<path d="M147.7 630.5L147.7 640"/>
<ellipse cx="129.6" cy="626" rx="8.6" ry="14.4" transform="rotate(-30 129.6 626)" fill="#fff"/>
<path d="M119.8 615L122.4 613.5L136.8 638.5L134.2 640Z" fill="#fff" stroke="none"/>
<path d="M119.8 615L122.4 613.5"/>
<path d="M134.2 640L136.8 638.5"/>
<ellipse cx="127" cy="627.5" rx="8.6" ry="14.4" transform="rotate(-30 127 627.5)" fill="#fff"/>
<ellipse cx="127" cy="627.5" rx="7.9" ry="13.2" transform="rotate(-30 127 627.5)" fill="none" stroke-width="0.5"/>
<ellipse cx="127" cy="627.5" rx="6.5" ry="10.8" transform="rotate(-30 127 627.5)" fill="#fff"/>
<path d="M133.1 636.3L131.6 636.4L130 636L128.3 635.3L126.7 634.1L125.1 632.5L123.7 630.7L122.6 628.7L121.7 626.6L121.1 624.5L120.9 622.5L121.1 620.6L121.6 619.1L122.4 617.9" fill="none"/>
<path d="M136.6 635.8L136 637.1L135.3 638.3L134.4 639.2L133.2 639.8" fill="none" stroke-width="1.6"/>
<path d="M118.1 617.7L119 616.4L120.1 615.5L121.5 615L123 614.9" fill="none" stroke-width="1.4"/>
<text x="128.6" y="660" font-size="8.2" text-anchor="middle" fill="#222" stroke="none">3</text>
<path d="M128.6 641.5L128.6 651"/>
<ellipse cx="106.5" cy="639.8" rx="7.8" ry="13" transform="rotate(-30 106.5 639.8)" fill="#fff"/>
<path d="M89.2 627.8L100 628.5L113 651.1L108.2 660.8Z" fill="#fff" stroke="none"/>
<path d="M89.2 627.8L100 628.5"/>
<path d="M108.2 660.8L113 651.1"/>
<ellipse cx="98.7" cy="644.3" rx="11.4" ry="19" transform="rotate(-30 98.7 644.3)" fill="#fff"/>
<ellipse cx="106.5" cy="639.8" rx="7.8" ry="13" transform="rotate(-30 106.5 639.8)" fill="#fff"/>
<ellipse cx="111.7" cy="636.8" rx="7.8" ry="13" transform="rotate(-30 111.7 636.8)" fill="#fff"/>
<path d="M100 628.5L105.2 625.5L118.2 648.1L113 651.1Z" fill="#fff" stroke="none"/>
<path d="M100 628.5L105.2 625.5"/>
<path d="M113 651.1L118.2 648.1"/>
<ellipse cx="106.5" cy="639.8" rx="7.8" ry="13" transform="rotate(-30 106.5 639.8)" fill="#fff"/>
<ellipse cx="97.1" cy="645.2" rx="19.8" ry="33" transform="rotate(-30 97.1 645.2)" fill="#fff"/>
<path d="M78.7 617.7L80.6 616.6L113.6 673.8L111.7 674.9Z" fill="#fff" stroke="none"/>
<path d="M78.7 617.7L80.6 616.6"/>
<path d="M111.7 674.9L113.6 673.8"/>
<ellipse cx="95.2" cy="646.3" rx="19.8" ry="33" transform="rotate(-30 95.2 646.3)" fill="#fff"/>
<ellipse cx="94.7" cy="646.3" rx="8.1" ry="13.5" transform="rotate(-30 94.7 646.3)" fill="#fff"/>
<path d="M102.9 654.3L101.1 654L99.3 653.2L97.5 652L95.8 650.3L94.2 648.3L93 646.1L92 643.8L91.4 641.5L91.2 639.3L91.5 637.3L92.1 635.6" fill="none"/>
<path d="M88.5 635.5L88.4 635.5" fill="none"/>
<path d="M91.5 634L87.2 636.5M94.2 634.8L89.9 637.3M96.9 636.5L92.6 639M99.4 639L95.1 641.5M101.6 642L97.3 644.5M103.2 645.4L98.9 647.9M104.2 648.8L99.9 651.3M104.4 652.1L100.1 654.6M103.9 654.9L99.6 657.4" fill="none" stroke-width="0.6"/>
<ellipse cx="84.5" cy="622.8" rx="1.6" ry="2.6" transform="rotate(-30 84.5 622.8)" fill="#777" stroke-width="0.5"/>
<ellipse cx="85.1" cy="622.6" rx="1" ry="1.6" transform="rotate(-30 85.1 622.6)" fill="#fff" stroke-width="0.3"/>
<ellipse cx="111.8" cy="645" rx="1.6" ry="2.6" transform="rotate(-30 111.8 645)" fill="#777" stroke-width="0.5"/>
<ellipse cx="112.4" cy="644.8" rx="1" ry="1.6" transform="rotate(-30 112.4 644.8)" fill="#fff" stroke-width="0.3"/>
<ellipse cx="104" cy="670.1" rx="1.6" ry="2.6" transform="rotate(-30 104 670.1)" fill="#777" stroke-width="0.5"/>
<ellipse cx="104.6" cy="669.9" rx="1" ry="1.6" transform="rotate(-30 104.6 669.9)" fill="#fff" stroke-width="0.3"/>
<ellipse cx="79.1" cy="648.8" rx="1.6" ry="2.6" transform="rotate(-30 79.1 648.8)" fill="#777" stroke-width="0.5"/>
<ellipse cx="79.7" cy="648.6" rx="1" ry="1.6" transform="rotate(-30 79.7 648.6)" fill="#fff" stroke-width="0.3"/>
<path d="M75.7 628.1L76.1 628L76.5 628L76.9 628.1L77.4 628.3L77.9 628.7L78.3 629.2L78.7 629.7L79 630.3L79.2 630.9L79.3 631.5L79.3 632L79.3 632.5L79.1 632.9L78.8 633.2L78.5 633.4L78.1 633.4" fill="none" stroke-width="0.6"/>
<path d="M110.9 661.4L111.3 661.2L111.7 661.2L112.2 661.4L112.7 661.6L113.1 662L113.6 662.4L113.9 663L114.2 663.5L114.5 664.1L114.6 664.7L114.6 665.3L114.5 665.8L114.3 666.2L114.1 666.5L113.7 666.7L113.3 666.7" fill="none" stroke-width="0.6"/>
<text x="93.8" y="605" font-size="8.2" text-anchor="middle" fill="#222" stroke="none">2</text>
<path d="M93.8 608L93.8 617"/>
<ellipse cx="69.4" cy="660.5" rx="6.9" ry="11.5" transform="rotate(-30 69.4 660.5)" fill="#fff"/>
<path d="M61.5 651.8L63.7 650.6L75.2 670.5L73 671.8Z" fill="#fff" stroke="none"/>
<path d="M61.5 651.8L63.7 650.6"/>
<path d="M73 671.8L75.2 670.5"/>
<ellipse cx="67.3" cy="661.8" rx="6.9" ry="11.5" transform="rotate(-30 67.3 661.8)" fill="#fff"/>
<ellipse cx="67.3" cy="661.8" rx="5.1" ry="8.5" transform="rotate(-30 67.3 661.8)" fill="#fff"/>
<path d="M57.8 657.4L63 654.4L71.5 669.2L66.3 672.2Z" fill="#fff" stroke="none"/>
<path d="M57.8 657.4L63 654.4"/>
<path d="M66.3 672.2L71.5 669.2"/>
<ellipse cx="62.1" cy="664.8" rx="5.1" ry="8.5" transform="rotate(-30 62.1 664.8)" fill="#fff"/>
<path d="M64.6 672.6L69.8 669.6M59.7 670.1L64.9 667.1M56.3 664.2L61.5 661.2M56.6 658.8L61.8 655.8" fill="none"/>
<ellipse cx="62.1" cy="664.8" rx="3.7" ry="6.2" transform="rotate(-30 62.1 664.8)" fill="#fff"/>
<ellipse cx="62.1" cy="664.8" rx="3" ry="5" transform="rotate(-30 62.1 664.8)" fill="#555"/>
<path d="M61.1 663.1L59.6 660.5M61.9 663L61.6 660.4M62.8 663.7L63.8 662M63.4 664.8L65.3 664.7M63.5 665.8L65.6 667.4M63.1 666.5L64.6 669.1M62.3 666.6L62.6 669.2M61.4 665.9L60.4 667.6M60.8 664.8L58.8 664.9M60.7 663.8L58.5 662.2" fill="none" stroke="#ddd" stroke-width="0.5"/>
<text x="65" y="637.8" font-size="8.2" text-anchor="middle" fill="#222" stroke="none">1</text>
<path d="M65 641L65 652"/>
<path d="M32 625.5L37.6 615.6L38 616.9L50 611L50.7 618.9L38.7 625L39.2 628.8Z" fill="#141414" stroke-width="0.5"/>
<path d="M40.3 618.3L48.9 614L49.3 617.6L40.7 622Z" fill="#e8e8e8" stroke="none"/>
<text x="40.6" y="621.9" font-size="4.6" font-weight="bold" fill="#111" stroke="none" transform="rotate(-26.5 40.6 621.9)" textLength="8.6" lengthAdjust="spacingAndGlyphs">FWD</text>
<path d="M55.4 455.5L44.6 461.8L83.6 483.8L324.3 344.5L372.8 373L364.5 377.6" stroke-width="1"/>
<path d="M59 554.4L51.2 559L95.7 585L328.5 451L380 481.3L373 485.6" stroke-width="1"/>
<text x="28.3" y="705" font-size="8" fill="#000" stroke="none" textLength="56">JB23W-5_291K</text>
<text x="28.3" y="716.3" font-size="8" fill="#000" stroke="none" textLength="67.5">TRANSFER GEAR</text>
</svg><!--/DIAG-->
<div id="desk"></div>
<div id="task">
<div class="tb" style="left:2px;width:54px;font-weight:bold;"><span style="position:absolute;left:3px;top:2px;width:18px;height:16px"><svg width="18" height="16" viewBox="0 0 18 16"><path d="M6 2.2c2-1.6 3.6-1.6 5.4-0.4c1.8 1.2 3.4 1 5 -0.2l-1.2 12c-1.6 1.2-3.2 1.4-5 0.2c-1.8-1.2-3.4-1.2-5.4 0.4z" fill="#111"/><path d="M7 3c1.3-0.9 2.4-0.9 3.6-0.2l-0.5 4.8c-1.2-0.7-2.4-0.7-3.7 0.2z" fill="#e8402a"/><path d="M11.6 3.3c1.2 0.6 2.3 0.5 3.5-0.2l-0.5 4.8c-1.2 0.7-2.3 0.8-3.5 0.2z" fill="#58c832"/><path d="M6.3 8.8c1.3-0.9 2.5-0.9 3.7-0.2l-0.5 4.6c-1.2-0.7-2.4-0.7-3.7 0.2z" fill="#2838d8"/><path d="M11 9.1c1.2 0.6 2.3 0.5 3.5-0.2l-0.5 4.6c-1.2 0.7-2.3 0.8-3.5 0.2z" fill="#f0e040"/><path d="M0.5 4.5h1.5M3 4.3h2.5M0.5 6.5h1.5M3 6.3h2.5M0.5 8.6h1.5M3 8.4h2.5M0.5 10.7h1.5M3 10.5h2.5" stroke="#111" stroke-width="1.2"/><path d="M3 5.3h2.6M3 7.3h2.6" stroke="#e8402a" stroke-width="1"/><path d="M3 9.5h2.6M3 11.5h2.6" stroke="#2838d8" stroke-width="1"/></svg></span><span style="position:absolute;left:21px;top:1px;font-size:11px;letter-spacing:0.3px">Пуск</span></div>
<div class="sep" style="left:59px"></div><div class="grip" style="left:63px"></div>
<div class="sep" style="left:143px"></div><div class="grip" style="left:147px"></div>
<div class="tb" style="left:153px;width:160px"><span style="position:absolute;left:3px;top:2px;width:16px;height:16px"><svg class="ie" width="16" height="16" viewBox="0 0 16 16"><path d="M4.5 0.5h7l3 3v12h-10z" fill="#fff" stroke="#6a6a6a" stroke-width="0.8"/><path d="M11.5 0.5v3h3" fill="#d8d8d8" stroke="#6a6a6a" stroke-width="0.6"/><ellipse cx="6" cy="8.3" rx="4.6" ry="4.4" fill="none" stroke="#2a52c8" stroke-width="2.1"/><path d="M1.6 8.6h8.6" stroke="#2a52c8" stroke-width="1.6"/><path d="M7.5 10.3h4v3.5h-4z" fill="#fff"/><path d="M0.6 11.5c1-5 5-8.5 10.2-8.8" fill="none" stroke="#9ab4f0" stroke-width="1"/></svg></span><span id="tk1" style="position:absolute;left:21px;top:0">SUZUKI_SIOS010 メイン - ...</span></div>
<div class="tb act" style="left:317px;width:160px"><span style="position:absolute;left:4px;top:3px;width:16px;height:16px"><svg class="ie" width="16" height="16" viewBox="0 0 16 16"><path d="M4.5 0.5h7l3 3v12h-10z" fill="#fff" stroke="#6a6a6a" stroke-width="0.8"/><path d="M11.5 0.5v3h3" fill="#d8d8d8" stroke="#6a6a6a" stroke-width="0.6"/><ellipse cx="6" cy="8.3" rx="4.6" ry="4.4" fill="none" stroke="#2a52c8" stroke-width="2.1"/><path d="M1.6 8.6h8.6" stroke="#2a52c8" stroke-width="1.6"/><path d="M7.5 10.3h4v3.5h-4z" fill="#fff"/><path d="M0.6 11.5c1-5 5-8.5 10.2-8.8" fill="none" stroke="#9ab4f0" stroke-width="1"/></svg></span><span id="tk2" style="position:absolute;left:22px;top:1px">SUZUKI_SIOS024 イラ...</span></div>
<div id="tray"><span style="position:absolute;left:3px;top:2px;width:16px;height:16px;background:#0a0a78;color:#fff;font-size:11px;line-height:16px;text-align:center;letter-spacing:-0.5px">EN</span><span style="position:absolute;left:37px;top:3px;font-size:11px;line-height:14px">9:21</span></div>
</div>
</body></html>
